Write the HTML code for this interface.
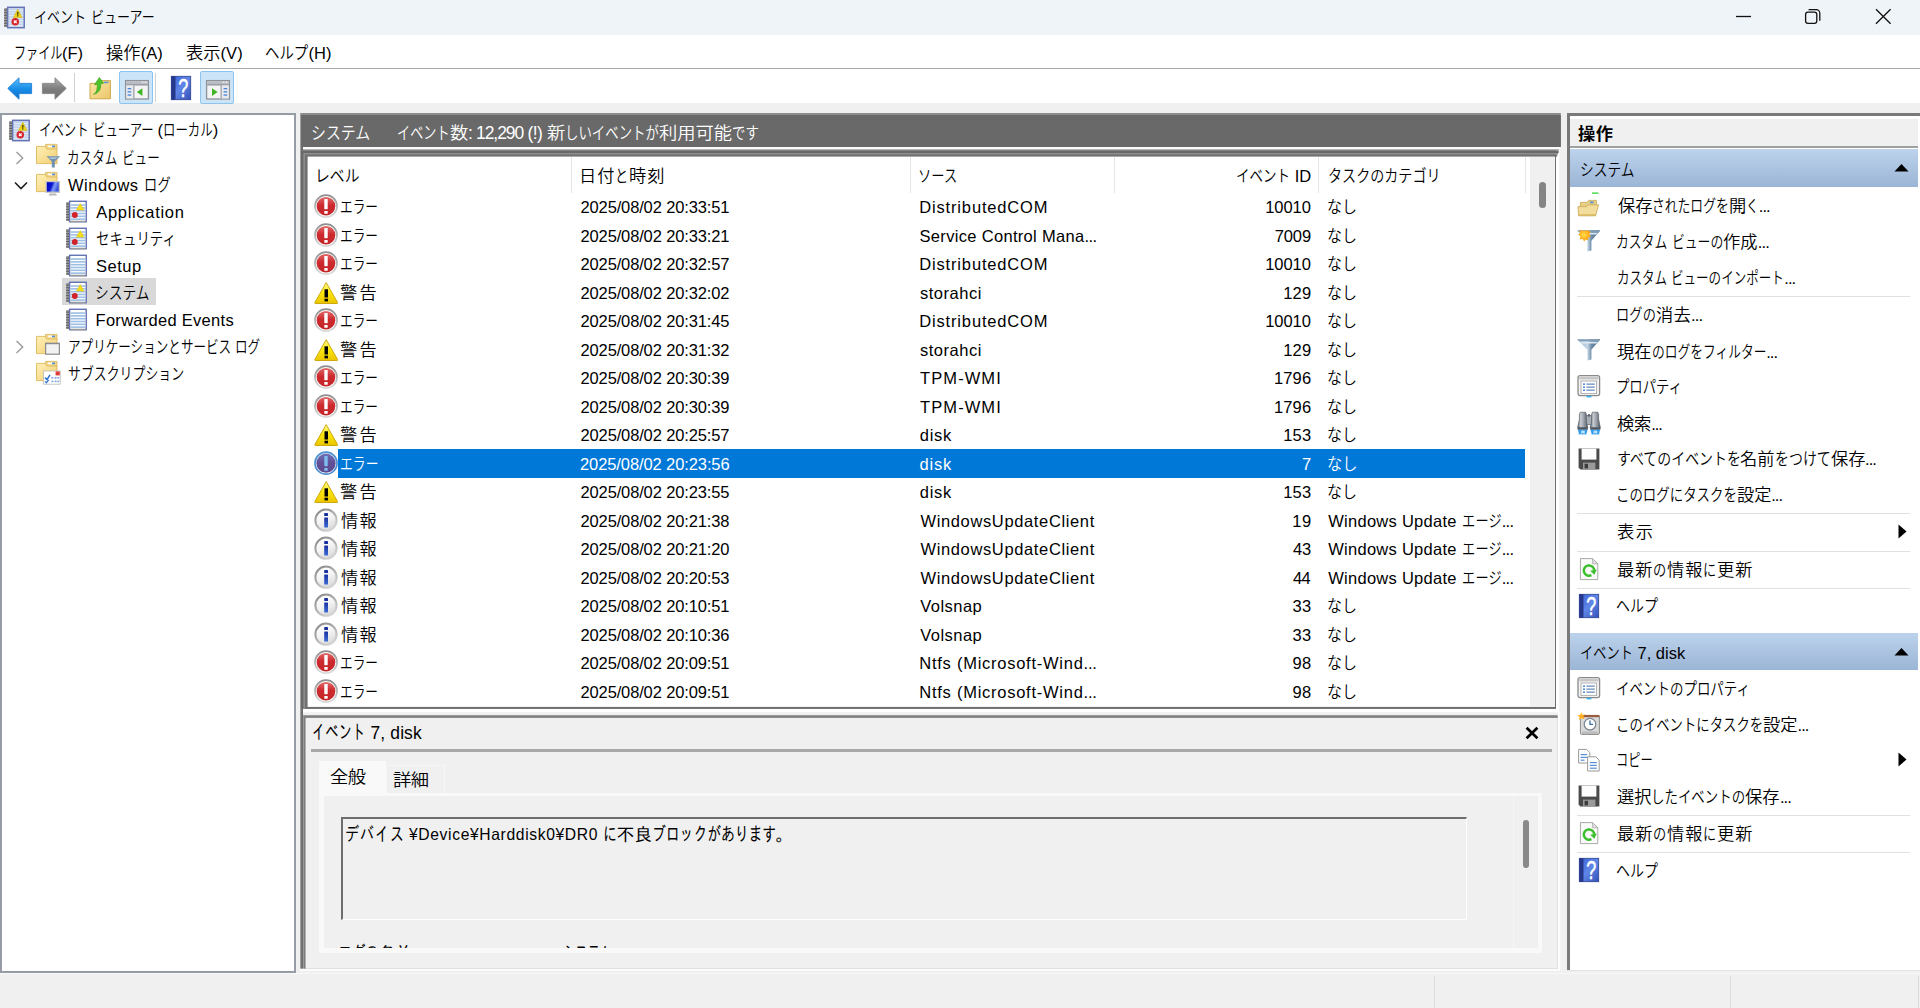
<!DOCTYPE html>
<html lang="ja"><head><meta charset="utf-8"><title>イベント ビューアー</title><style>
html,body{margin:0;padding:0;background:#f0f0f0;}
body{width:1920px;height:1008px;overflow:hidden;position:relative;font-family:"Liberation Sans","Noto Sans CJK JP",sans-serif;font-weight:350;}
.t{position:absolute;white-space:nowrap;display:block;}
.k{display:inline-block;transform-origin:0 50%;}
svg{display:block;overflow:visible}
</style></head><body>
<div style="position:absolute;left:0.00px;top:0.00px;width:1920.00px;height:35.00px;background:#eff4f9;"></div>
<div style="position:absolute;left:3.50px;top:6.00px;width:21.00px;height:23.00px"><svg width="100%" height="100%" viewBox="0 0 22 23"><rect x="0.3" y="1.6" width="3.6" height="19.8" fill="#9a9a9a"/><rect x="0" y="3.2" width="4.6" height="1.1" fill="#5d5d5d"/><rect x="0" y="5.95" width="4.6" height="1.1" fill="#5d5d5d"/><rect x="0" y="8.7" width="4.6" height="1.1" fill="#5d5d5d"/><rect x="0" y="11.45" width="4.6" height="1.1" fill="#5d5d5d"/><rect x="0" y="14.2" width="4.6" height="1.1" fill="#5d5d5d"/><rect x="0" y="16.95" width="4.6" height="1.1" fill="#5d5d5d"/><rect x="0" y="19.7" width="4.6" height="1.1" fill="#5d5d5d"/><rect x="3.8" y="0.8" width="17.4" height="21.4" fill="#c3d3ec" stroke="#6474b4" stroke-width="1.5"/><rect x="5" y="3.6" width="15" height="1" fill="#e3ebf7"/><rect x="5" y="6.25" width="15" height="1" fill="#e3ebf7"/><rect x="5" y="8.9" width="15" height="1" fill="#e3ebf7"/><rect x="5" y="11.55" width="15" height="1" fill="#e3ebf7"/><rect x="5" y="14.2" width="15" height="1" fill="#e3ebf7"/><rect x="5" y="16.85" width="15" height="1" fill="#e3ebf7"/><rect x="5" y="19.5" width="15" height="1" fill="#e3ebf7"/><path d="M14.4 2.8L19 11.6H9.8Z" fill="#eed31a" stroke="#cdb000" stroke-width="0.5"/><rect x="13.8" y="5.6" width="1.3" height="3" fill="#3a3000"/><rect x="13.8" y="9.2" width="1.3" height="1.2" fill="#3a3000"/><circle cx="11.8" cy="16" r="3.9" fill="#d8232a"/><path d="M10.4 14.6L13.2 17.4M13.2 14.6L10.4 17.4" stroke="#fff" stroke-width="1.3"/></svg></div>
<span id="t0" class="t " style="top:6.30px;font-size:16.00px;line-height:24px;color:#000;left:34.02px;"><span class="k" style="transform:scaleX(0.813);margin-right:-0.748em">イベント</span> <span class="k" style="transform:scaleX(0.813);margin-right:-0.934em">ビューアー</span></span>
<svg style="position:absolute;left:1730px;top:4px" width="170" height="26" viewBox="0 0 170 26" fill="none" stroke="#111" stroke-width="1.3"><path d="M6 12.5H21"/><rect x="75.6" y="8.2" width="11.2" height="11.2" rx="2.4"/><path d="M78.6 5.6H86.2a3.6 3.6 0 0 1 3.6 3.6V16.8"/><path d="M146 5.2L160.6 19.8M160.6 5.2L146 19.8"/></svg>
<div style="position:absolute;left:0.00px;top:35.00px;width:1920.00px;height:33.00px;background:#fff;"></div>
<span id="t1" class="t " style="top:40.60px;font-size:16.50px;line-height:24px;color:#000;left:13.61px;"><span class="k" style="transform:scaleX(0.734);margin-right:-1.065em">ファイル</span>(F)</span>
<span id="t2" class="t " style="top:40.60px;font-size:16.50px;line-height:24px;color:#000;left:106.21px;letter-spacing:0.010px;"><span class="k" style="transform:scaleX(1.045);margin-right:0.090em">操作</span>(A)</span>
<span id="t3" class="t " style="top:40.60px;font-size:16.50px;line-height:24px;color:#000;left:185.66px;letter-spacing:0.125px;"><span class="k" style="transform:scaleX(1.045);margin-right:0.090em">表示</span>(V)</span>
<span id="t4" class="t " style="top:40.60px;font-size:16.50px;line-height:24px;color:#000;left:265.27px;"><span class="k" style="transform:scaleX(0.874);margin-right:-0.377em">ヘルプ</span>(H)</span>
<div style="position:absolute;left:0.00px;top:68.00px;width:1920.00px;height:1.00px;background:#a8a8a8;"></div>
<div style="position:absolute;left:0.00px;top:69.00px;width:1920.00px;height:1.00px;background:#ececec;"></div>
<div style="position:absolute;left:0.00px;top:69.00px;width:1920.00px;height:34.00px;background:#fff;"></div>
<div style="position:absolute;left:7.00px;top:77.00px;width:26.00px;height:23.00px"><svg width="100%" height="100%" viewBox="0 0 26 23"><defs><linearGradient id="g1" x1="0" y1="0" x2="0" y2="1"><stop offset="0" stop-color="#5cc0ff"/><stop offset="0.5" stop-color="#1b8fe8"/><stop offset="1" stop-color="#0a6ccc"/></linearGradient></defs><path d="M0.8 11.4L12 0.8V6.4H24.6V16.6H12V22.2Z" fill="url(#g1)" stroke="#2a86d8" stroke-width="1" stroke-linejoin="round"/></svg></div>
<div style="position:absolute;left:41.00px;top:77.00px;width:26.00px;height:23.00px"><svg width="100%" height="100%" viewBox="0 0 26 23"><defs><linearGradient id="g2" x1="0" y1="0" x2="0" y2="1"><stop offset="0" stop-color="#b0b0b0"/><stop offset="0.5" stop-color="#7e7e7e"/><stop offset="1" stop-color="#6c6c6c"/></linearGradient></defs><path d="M25.2 11.4L14 0.8V6.4H1.4V16.6H14V22.2Z" fill="url(#g2)" stroke="#8a8a8a" stroke-width="1" stroke-linejoin="round"/></svg></div>
<div style="position:absolute;left:73.50px;top:73.00px;width:1.00px;height:29.00px;background:#d0d0d0;"></div>
<div style="position:absolute;left:89.00px;top:77.00px;width:23.00px;height:23.00px"><svg width="100%" height="100%" viewBox="0 0 23 23"><defs><linearGradient id="g3" x1="0" y1="0" x2="1" y2="1"><stop offset="0" stop-color="#fbe7a6"/><stop offset="1" stop-color="#eac66a"/></linearGradient></defs><path d="M1 6.4H9L11 3.6H21.4V21.8H1Z" fill="url(#g3)" stroke="#cfa94e" stroke-width="1"/><rect x="15" y="4.6" width="4.4" height="1.6" fill="#5b97dc"/><path d="M4.6 17.2C8.4 15.4 8.2 10.4 8.4 7.2L5.6 7.6L10.4 0.6L14.6 6.2L11.8 6.6C12 11 10.6 16.4 4.6 17.2Z" fill="#4fc32c" stroke="#35a31a" stroke-width="0.7"/></svg></div>
<div style="position:absolute;left:118.50px;top:71.00px;width:34.50px;height:32.50px;background:#cce4f7;border:1px solid #8cc4ee;box-sizing:border-box;border-radius:2px"></div>
<div style="position:absolute;left:124.50px;top:80.00px;width:24.00px;height:20.00px"><svg width="100%" height="100%" viewBox="0 0 24 20"><rect x="0.6" y="0.6" width="22.8" height="18.4" fill="#f4f4f4" stroke="#8d9198" stroke-width="1.3"/><rect x="1.2" y="1.2" width="21.6" height="3.2" fill="#b9bcc2"/><rect x="1.2" y="4.2" width="21.6" height="1.3" fill="#8d9198"/><rect x="16.6" y="1.6" width="1.8" height="1.2" fill="#f4f4f4"/><rect x="19.6" y="1.6" width="1.8" height="1.2" fill="#f4f4f4"/><rect x="8.2" y="5.4" width="1.2" height="13" fill="#8d9198"/><rect x="1.3" y="5.5" width="6.9" height="12.9" fill="#e6e9ee"/><rect x="2.6" y="8" width="3.6" height="1.3" fill="#4a86d8"/><rect x="2.6" y="11.2" width="3.6" height="1.3" fill="#4a86d8"/><rect x="2.6" y="14.4" width="3.6" height="1.3" fill="#4a86d8"/><path d="M17.4 8.2V16L11.8 12.1Z" fill="#3fb526"/></svg></div>
<div style="position:absolute;left:154.50px;top:73.00px;width:1.00px;height:29.00px;background:#d0d0d0;"></div>
<div style="position:absolute;left:171.00px;top:75.50px;width:20.00px;height:24.00px"><svg width="100%" height="100%" viewBox="0 0 20 24"><defs><linearGradient id="g4" x1="0" y1="0" x2="1" y2="1"><stop offset="0" stop-color="#3a63d6"/><stop offset="0.5" stop-color="#5f86e6"/><stop offset="1" stop-color="#3350b8"/></linearGradient></defs><rect x="0.3" y="0.3" width="19.4" height="23.4" fill="url(#g4)" stroke="#2c3f94" stroke-width="0.8"/><rect x="0.3" y="0.3" width="4.2" height="23.4" fill="#26378c"/><text transform="translate(12.2 20.6) scale(0.72 1)" text-anchor="middle" font-family="Liberation Sans,sans-serif" font-size="25" fill="#fff" stroke="#fff" stroke-width="0.5">?</text></svg></div>
<div style="position:absolute;left:199.50px;top:71.00px;width:34.50px;height:32.50px;background:#cce4f7;border:1px solid #8cc4ee;box-sizing:border-box;border-radius:2px"></div>
<div style="position:absolute;left:205.50px;top:80.00px;width:24.00px;height:20.00px"><svg width="100%" height="100%" viewBox="0 0 24 20"><rect x="0.6" y="0.6" width="22.8" height="18.4" fill="#f4f4f4" stroke="#8d9198" stroke-width="1.3"/><rect x="1.2" y="1.2" width="21.6" height="3.2" fill="#b9bcc2"/><rect x="1.2" y="4.2" width="21.6" height="1.3" fill="#8d9198"/><rect x="16.6" y="1.6" width="1.8" height="1.2" fill="#f4f4f4"/><rect x="19.6" y="1.6" width="1.8" height="1.2" fill="#f4f4f4"/><rect x="14.6" y="5.4" width="1.2" height="13" fill="#8d9198"/><rect x="15.8" y="5.5" width="6.9" height="12.9" fill="#e6e9ee"/><rect x="17.6" y="8" width="3.6" height="1.3" fill="#4a86d8"/><rect x="17.6" y="11.2" width="3.6" height="1.3" fill="#4a86d8"/><rect x="17.6" y="14.4" width="3.6" height="1.3" fill="#4a86d8"/><path d="M6 8.2V16L11.6 12.1Z" fill="#3fb526"/></svg></div>
<div style="position:absolute;left:0.00px;top:113.00px;width:296.00px;height:859.50px;background:#fff;border:2px solid #969ca6;box-sizing:border-box"></div>
<div style="position:absolute;left:62.00px;top:278.00px;width:94.00px;height:26.50px;background:#d9d9d9;"></div>
<div style="position:absolute;left:9.00px;top:118.80px;width:21.00px;height:23.00px"><svg width="100%" height="100%" viewBox="0 0 22 23"><rect x="0.3" y="1.6" width="3.6" height="19.8" fill="#9a9a9a"/><rect x="0" y="3.2" width="4.6" height="1.1" fill="#5d5d5d"/><rect x="0" y="5.95" width="4.6" height="1.1" fill="#5d5d5d"/><rect x="0" y="8.7" width="4.6" height="1.1" fill="#5d5d5d"/><rect x="0" y="11.45" width="4.6" height="1.1" fill="#5d5d5d"/><rect x="0" y="14.2" width="4.6" height="1.1" fill="#5d5d5d"/><rect x="0" y="16.95" width="4.6" height="1.1" fill="#5d5d5d"/><rect x="0" y="19.7" width="4.6" height="1.1" fill="#5d5d5d"/><rect x="3.8" y="0.8" width="17.4" height="21.4" fill="#c3d3ec" stroke="#6474b4" stroke-width="1.5"/><rect x="5" y="3.6" width="15" height="1" fill="#e3ebf7"/><rect x="5" y="6.25" width="15" height="1" fill="#e3ebf7"/><rect x="5" y="8.9" width="15" height="1" fill="#e3ebf7"/><rect x="5" y="11.55" width="15" height="1" fill="#e3ebf7"/><rect x="5" y="14.2" width="15" height="1" fill="#e3ebf7"/><rect x="5" y="16.85" width="15" height="1" fill="#e3ebf7"/><rect x="5" y="19.5" width="15" height="1" fill="#e3ebf7"/><path d="M14.4 2.8L19 11.6H9.8Z" fill="#eed31a" stroke="#cdb000" stroke-width="0.5"/><rect x="13.8" y="5.6" width="1.3" height="3" fill="#3a3000"/><rect x="13.8" y="9.2" width="1.3" height="1.2" fill="#3a3000"/><circle cx="11.8" cy="16" r="3.9" fill="#d8232a"/><path d="M10.4 14.6L13.2 17.4M13.2 14.6L10.4 17.4" stroke="#fff" stroke-width="1.3"/></svg></div>
<span id="t5" class="t " style="top:118.10px;font-size:16.50px;line-height:24px;color:#000;left:38.50px;"><span class="k" style="transform:scaleX(0.751);margin-right:-0.996em">イベント</span> <span class="k" style="transform:scaleX(0.751);margin-right:-1.245em">ビューアー</span> (<span class="k" style="transform:scaleX(0.751);margin-right:-0.996em">ローカル</span>)</span>
<svg style="position:absolute;left:14.5px;top:150.5px" width="9" height="14" viewBox="0 0 9 14"><path d="M1.5 1L7.7 7L1.5 13" fill="none" stroke="#9b9b9b" stroke-width="1.4"/></svg>
<div style="position:absolute;left:36.00px;top:144.40px;width:25.00px;height:24.00px"><svg width="100%" height="100%" viewBox="0 0 25 24"><defs><linearGradient id="g5" x1="0" y1="0" x2="1" y2="1"><stop offset="0" stop-color="#fff0b8"/><stop offset="1" stop-color="#f2cf72"/></linearGradient></defs><path d="M9.5 0.4H21V5.5H9.5Z" fill="#f0d58a" stroke="#d9b65a" stroke-width="0.8"/><rect x="12" y="1.6" width="5" height="1.6" fill="#fff"/><rect x="16" y="1.6" width="3" height="1.6" fill="#4a90e2"/><path d="M0.5 2.4H9L11 5H21V19.6H0.5Z" fill="url(#g5)" stroke="#dcb95c" stroke-width="0.9"/><path d="M10.4 12.3H24.2L18.8 17.6V23.6H15.8V17.6Z" fill="#6f90b0"/><path d="M12.2 13.2H22.2L19.4 15H15Z" fill="#a9c3da"/></svg></div>
<span id="t6" class="t " style="top:145.50px;font-size:16.50px;line-height:24px;color:#000;left:67.22px;"><span class="k" style="transform:scaleX(0.764);margin-right:-0.944em">カスタム</span> <span class="k" style="transform:scaleX(0.764);margin-right:-0.708em">ビュー</span></span>
<svg style="position:absolute;left:13.5px;top:180.5px" width="14" height="9" viewBox="0 0 14 9"><path d="M1 1.5L7 7.6L13 1.5" fill="none" stroke="#1e1e1e" stroke-width="1.5"/></svg>
<div style="position:absolute;left:36.00px;top:171.60px;width:25.00px;height:24.00px"><svg width="100%" height="100%" viewBox="0 0 25 24"><defs><linearGradient id="g6" x1="0" y1="0" x2="1" y2="1"><stop offset="0" stop-color="#fff0b8"/><stop offset="1" stop-color="#f2cf72"/></linearGradient></defs><path d="M9.5 0.4H21V5.5H9.5Z" fill="#f0d58a" stroke="#d9b65a" stroke-width="0.8"/><rect x="12" y="1.6" width="5" height="1.6" fill="#fff"/><rect x="16" y="1.6" width="3" height="1.6" fill="#4a90e2"/><path d="M0.5 2.4H9L11 5H21V19.6H0.5Z" fill="url(#g6)" stroke="#dcb95c" stroke-width="0.9"/><defs><linearGradient id="g7" x1="0" y1="0" x2="1" y2="0.3"><stop offset="0" stop-color="#0000c0"/><stop offset="0.45" stop-color="#0a14d0"/><stop offset="0.7" stop-color="#7f9cf5"/><stop offset="1" stop-color="#3b55e0"/></linearGradient></defs><rect x="9.6" y="9" width="14.4" height="12" fill="#c6c6c6"/><rect x="10.8" y="10.2" width="12" height="9.4" fill="url(#g7)"/><path d="M13.6 21.6H20L21 23.6H12.6Z" fill="#b8b8b8"/></svg></div>
<span id="t7" class="t " style="top:172.50px;font-size:16.50px;line-height:24px;color:#000;left:68.00px;letter-spacing:0.531px;">Windows <span class="k" style="transform:scaleX(0.800);margin-right:-0.400em">ログ</span></span>
<div style="position:absolute;left:66.20px;top:200.00px;width:21.00px;height:23.00px"><svg width="100%" height="100%" viewBox="0 0 22 23"><rect x="0.3" y="1.6" width="3.6" height="19.8" fill="#9a9a9a"/><rect x="0" y="3.2" width="4.6" height="1.1" fill="#5d5d5d"/><rect x="0" y="5.95" width="4.6" height="1.1" fill="#5d5d5d"/><rect x="0" y="8.7" width="4.6" height="1.1" fill="#5d5d5d"/><rect x="0" y="11.45" width="4.6" height="1.1" fill="#5d5d5d"/><rect x="0" y="14.2" width="4.6" height="1.1" fill="#5d5d5d"/><rect x="0" y="16.95" width="4.6" height="1.1" fill="#5d5d5d"/><rect x="0" y="19.7" width="4.6" height="1.1" fill="#5d5d5d"/><rect x="3.8" y="0.8" width="17.4" height="21.4" fill="#fff" stroke="#6474b4" stroke-width="1.5"/><rect x="4.5" y="21.2" width="16" height="1.6" fill="#9a9a9a"/><rect x="5" y="3.9" width="15" height="1.7" fill="#9dbfe4"/><rect x="5" y="6.85" width="15" height="1.7" fill="#9dbfe4"/><rect x="5" y="9.8" width="15" height="1.7" fill="#9dbfe4"/><rect x="5" y="12.75" width="15" height="1.7" fill="#9dbfe4"/><rect x="5" y="15.7" width="15" height="1.7" fill="#9dbfe4"/><rect x="5" y="18.65" width="15" height="1.7" fill="#9dbfe4"/><path d="M14.9 3.2L18.9 10H10.9Z" fill="#f4dc1c" stroke="#e2c600" stroke-width="0.5"/><circle cx="9.2" cy="15.2" r="3.1" fill="#d2232a"/></svg></div>
<span id="t8" class="t " style="top:199.50px;font-size:16.50px;line-height:24px;color:#000;left:96.23px;letter-spacing:0.692px;">Application</span>
<div style="position:absolute;left:66.20px;top:227.00px;width:21.00px;height:23.00px"><svg width="100%" height="100%" viewBox="0 0 22 23"><rect x="0.3" y="1.6" width="3.6" height="19.8" fill="#9a9a9a"/><rect x="0" y="3.2" width="4.6" height="1.1" fill="#5d5d5d"/><rect x="0" y="5.95" width="4.6" height="1.1" fill="#5d5d5d"/><rect x="0" y="8.7" width="4.6" height="1.1" fill="#5d5d5d"/><rect x="0" y="11.45" width="4.6" height="1.1" fill="#5d5d5d"/><rect x="0" y="14.2" width="4.6" height="1.1" fill="#5d5d5d"/><rect x="0" y="16.95" width="4.6" height="1.1" fill="#5d5d5d"/><rect x="0" y="19.7" width="4.6" height="1.1" fill="#5d5d5d"/><rect x="3.8" y="0.8" width="17.4" height="21.4" fill="#fff" stroke="#6474b4" stroke-width="1.5"/><rect x="4.5" y="21.2" width="16" height="1.6" fill="#9a9a9a"/><rect x="5" y="3.9" width="15" height="1.7" fill="#9dbfe4"/><rect x="5" y="6.85" width="15" height="1.7" fill="#9dbfe4"/><rect x="5" y="9.8" width="15" height="1.7" fill="#9dbfe4"/><rect x="5" y="12.75" width="15" height="1.7" fill="#9dbfe4"/><rect x="5" y="15.7" width="15" height="1.7" fill="#9dbfe4"/><rect x="5" y="18.65" width="15" height="1.7" fill="#9dbfe4"/><path d="M14.9 3.2L18.9 10H10.9Z" fill="#f4dc1c" stroke="#e2c600" stroke-width="0.5"/><circle cx="9.2" cy="15.2" r="3.1" fill="#d2232a"/></svg></div>
<span id="t9" class="t " style="top:226.50px;font-size:16.50px;line-height:24px;color:#000;left:95.60px;"><span class="k" style="transform:scaleX(0.816);margin-right:-1.107em">セキュリティ</span></span>
<div style="position:absolute;left:66.20px;top:254.00px;width:21.00px;height:23.00px"><svg width="100%" height="100%" viewBox="0 0 22 23"><rect x="0.3" y="1.6" width="3.6" height="19.8" fill="#9a9a9a"/><rect x="0" y="3.2" width="4.6" height="1.1" fill="#5d5d5d"/><rect x="0" y="5.95" width="4.6" height="1.1" fill="#5d5d5d"/><rect x="0" y="8.7" width="4.6" height="1.1" fill="#5d5d5d"/><rect x="0" y="11.45" width="4.6" height="1.1" fill="#5d5d5d"/><rect x="0" y="14.2" width="4.6" height="1.1" fill="#5d5d5d"/><rect x="0" y="16.95" width="4.6" height="1.1" fill="#5d5d5d"/><rect x="0" y="19.7" width="4.6" height="1.1" fill="#5d5d5d"/><rect x="3.8" y="0.8" width="17.4" height="21.4" fill="#fff" stroke="#6474b4" stroke-width="1.5"/><rect x="4.5" y="21.2" width="16" height="1.6" fill="#9a9a9a"/><rect x="5" y="3.9" width="15" height="1.7" fill="#9dbfe4"/><rect x="5" y="6.85" width="15" height="1.7" fill="#9dbfe4"/><rect x="5" y="9.8" width="15" height="1.7" fill="#9dbfe4"/><rect x="5" y="12.75" width="15" height="1.7" fill="#9dbfe4"/><rect x="5" y="15.7" width="15" height="1.7" fill="#9dbfe4"/><rect x="5" y="18.65" width="15" height="1.7" fill="#9dbfe4"/></svg></div>
<span id="t10" class="t " style="top:253.50px;font-size:16.50px;line-height:24px;color:#000;left:95.99px;letter-spacing:0.520px;">Setup</span>
<div style="position:absolute;left:66.20px;top:281.00px;width:21.00px;height:23.00px"><svg width="100%" height="100%" viewBox="0 0 22 23"><rect x="0.3" y="1.6" width="3.6" height="19.8" fill="#9a9a9a"/><rect x="0" y="3.2" width="4.6" height="1.1" fill="#5d5d5d"/><rect x="0" y="5.95" width="4.6" height="1.1" fill="#5d5d5d"/><rect x="0" y="8.7" width="4.6" height="1.1" fill="#5d5d5d"/><rect x="0" y="11.45" width="4.6" height="1.1" fill="#5d5d5d"/><rect x="0" y="14.2" width="4.6" height="1.1" fill="#5d5d5d"/><rect x="0" y="16.95" width="4.6" height="1.1" fill="#5d5d5d"/><rect x="0" y="19.7" width="4.6" height="1.1" fill="#5d5d5d"/><rect x="3.8" y="0.8" width="17.4" height="21.4" fill="#fff" stroke="#6474b4" stroke-width="1.5"/><rect x="4.5" y="21.2" width="16" height="1.6" fill="#9a9a9a"/><rect x="5" y="3.9" width="15" height="1.7" fill="#9dbfe4"/><rect x="5" y="6.85" width="15" height="1.7" fill="#9dbfe4"/><rect x="5" y="9.8" width="15" height="1.7" fill="#9dbfe4"/><rect x="5" y="12.75" width="15" height="1.7" fill="#9dbfe4"/><rect x="5" y="15.7" width="15" height="1.7" fill="#9dbfe4"/><rect x="5" y="18.65" width="15" height="1.7" fill="#9dbfe4"/><path d="M14.9 3.2L18.9 10H10.9Z" fill="#f4dc1c" stroke="#e2c600" stroke-width="0.5"/><circle cx="9.2" cy="15.2" r="3.1" fill="#d2232a"/></svg></div>
<span id="t11" class="t " style="top:280.50px;font-size:16.50px;line-height:24px;color:#000;left:94.82px;"><span class="k" style="transform:scaleX(0.833);margin-right:-0.670em">システム</span></span>
<div style="position:absolute;left:66.20px;top:308.00px;width:21.00px;height:23.00px"><svg width="100%" height="100%" viewBox="0 0 22 23"><rect x="0.3" y="1.6" width="3.6" height="19.8" fill="#9a9a9a"/><rect x="0" y="3.2" width="4.6" height="1.1" fill="#5d5d5d"/><rect x="0" y="5.95" width="4.6" height="1.1" fill="#5d5d5d"/><rect x="0" y="8.7" width="4.6" height="1.1" fill="#5d5d5d"/><rect x="0" y="11.45" width="4.6" height="1.1" fill="#5d5d5d"/><rect x="0" y="14.2" width="4.6" height="1.1" fill="#5d5d5d"/><rect x="0" y="16.95" width="4.6" height="1.1" fill="#5d5d5d"/><rect x="0" y="19.7" width="4.6" height="1.1" fill="#5d5d5d"/><rect x="3.8" y="0.8" width="17.4" height="21.4" fill="#fff" stroke="#6474b4" stroke-width="1.5"/><rect x="4.5" y="21.2" width="16" height="1.6" fill="#9a9a9a"/><rect x="5" y="3.9" width="15" height="1.7" fill="#9dbfe4"/><rect x="5" y="6.85" width="15" height="1.7" fill="#9dbfe4"/><rect x="5" y="9.8" width="15" height="1.7" fill="#9dbfe4"/><rect x="5" y="12.75" width="15" height="1.7" fill="#9dbfe4"/><rect x="5" y="15.7" width="15" height="1.7" fill="#9dbfe4"/><rect x="5" y="18.65" width="15" height="1.7" fill="#9dbfe4"/></svg></div>
<span id="t12" class="t " style="top:307.50px;font-size:16.50px;line-height:24px;color:#000;left:95.55px;letter-spacing:0.279px;">Forwarded Events</span>
<svg style="position:absolute;left:14.5px;top:339.5px" width="9" height="14" viewBox="0 0 9 14"><path d="M1.5 1L7.7 7L1.5 13" fill="none" stroke="#9b9b9b" stroke-width="1.4"/></svg>
<div style="position:absolute;left:36.00px;top:334.00px;width:25.00px;height:24.00px"><svg width="100%" height="100%" viewBox="0 0 25 24"><defs><linearGradient id="g8" x1="0" y1="0" x2="1" y2="1"><stop offset="0" stop-color="#fff0b8"/><stop offset="1" stop-color="#f2cf72"/></linearGradient></defs><path d="M9.5 0.4H21V5.5H9.5Z" fill="#f0d58a" stroke="#d9b65a" stroke-width="0.8"/><rect x="12" y="1.6" width="5" height="1.6" fill="#fff"/><rect x="16" y="1.6" width="3" height="1.6" fill="#4a90e2"/><path d="M0.5 2.4H9L11 5H21V19.6H0.5Z" fill="url(#g8)" stroke="#dcb95c" stroke-width="0.9"/><rect x="9.6" y="9.4" width="13.8" height="10.8" fill="#f2f2f2" stroke="#8c8c8c" stroke-width="1.2"/><rect x="9.6" y="8.8" width="13.8" height="1.4" fill="#8c8c8c"/></svg></div>
<span id="t13" class="t " style="top:334.50px;font-size:16.50px;line-height:24px;color:#000;left:67.73px;"><span class="k" style="transform:scaleX(0.762);margin-right:-3.091em">アプリケーションとサービス</span> <span class="k" style="transform:scaleX(0.762);margin-right:-0.476em">ログ</span></span>
<div style="position:absolute;left:36.00px;top:361.00px;width:25.00px;height:24.00px"><svg width="100%" height="100%" viewBox="0 0 25 24"><defs><linearGradient id="g9" x1="0" y1="0" x2="1" y2="1"><stop offset="0" stop-color="#fff0b8"/><stop offset="1" stop-color="#f2cf72"/></linearGradient></defs><path d="M9.5 0.4H21V5.5H9.5Z" fill="#f0d58a" stroke="#d9b65a" stroke-width="0.8"/><rect x="12" y="1.6" width="5" height="1.6" fill="#fff"/><rect x="16" y="1.6" width="3" height="1.6" fill="#4a90e2"/><path d="M0.5 2.4H9L11 5H21V19.6H0.5Z" fill="url(#g9)" stroke="#dcb95c" stroke-width="0.9"/><rect x="7.6" y="10" width="16.6" height="13.2" fill="#fff" stroke="#b9b9b9" stroke-width="0.8"/><rect x="19.6" y="10.4" width="4.2" height="4" fill="#e23b3b"/><path d="M9 16.6L11 18.6L14 13.8" fill="none" stroke="#2a6fd0" stroke-width="1.5"/><path d="M9 20.4L10.4 21.8L12.6 18.8" fill="none" stroke="#2a6fd0" stroke-width="1.2"/><rect x="15.4" y="16" width="2" height="1.6" fill="#7fa6dc"/><rect x="18.6" y="16" width="2" height="1.6" fill="#7fa6dc"/><rect x="21.4" y="16" width="1.8" height="1.6" fill="#7fa6dc"/><rect x="15.4" y="19.6" width="2" height="1.6" fill="#7fa6dc"/><rect x="18.6" y="19.6" width="2" height="1.6" fill="#7fa6dc"/><rect x="21.4" y="19.6" width="1.8" height="1.6" fill="#7fa6dc"/></svg></div>
<span id="t14" class="t " style="top:361.50px;font-size:16.50px;line-height:24px;color:#000;left:67.72px;"><span class="k" style="transform:scaleX(0.782);margin-right:-1.961em">サブスクリプション</span></span>
<div style="position:absolute;left:300.00px;top:113.00px;width:1260.50px;height:857.00px;background:#f0f0f0;"></div>
<svg style="position:absolute;left:0;top:0" width="1920" height="1008" viewBox="0 0 1920 1008"><rect x="300.00" y="113.00" width="1260.80" height="34.10" fill="#8c8c8c"/><rect x="301.70" y="115.00" width="1259.10" height="32.10" fill="#696969"/><rect x="300.00" y="147.10" width="1260.80" height="2.10" fill="#fdfdfd"/><rect x="300.00" y="149.20" width="1259.20" height="563.00" fill="#ffffff"/><rect x="300.00" y="149.20" width="1256.00" height="559.50" fill="#a0a0a0"/><rect x="301.30" y="150.50" width="1254.70" height="558.20" fill="#696969"/><rect x="303.30" y="153.00" width="1252.70" height="555.70" fill="#8c8c8c"/><rect x="305.00" y="154.50" width="1251.00" height="554.20" fill="#707070"/><rect x="1556.00" y="149.20" width="3.00" height="1.30" fill="#a0a0a0"/><rect x="1556.00" y="150.50" width="2.60" height="2.50" fill="#696969"/><rect x="1556.00" y="153.00" width="2.00" height="1.50" fill="#8c8c8c"/><rect x="1556.00" y="154.50" width="1.20" height="2.10" fill="#707070"/><rect x="307.60" y="156.60" width="1247.25" height="550.30" fill="#ffffff"/><rect x="300.00" y="113.00" width="1.20" height="855.80" fill="#a0a0a0"/><rect x="301.10" y="115.00" width="1.90" height="853.80" fill="#696969"/><rect x="302.90" y="715.00" width="1254.90" height="253.80" fill="#9a9a9a"/><rect x="304.20" y="716.30" width="1253.60" height="252.50" fill="#757575"/><rect x="305.50" y="717.80" width="1252.30" height="251.00" fill="#f0f0f0"/><rect x="1557.80" y="712.20" width="2.40" height="258.00" fill="#fdfdfd"/><rect x="300.00" y="968.80" width="1260.20" height="2.00" fill="#fdfdfd"/></svg>
<span id="t15" class="t " style="top:120.50px;font-size:17.50px;line-height:24px;color:#fff;left:311.06px;"><span class="k" style="transform:scaleX(0.853);margin-right:-0.587em">システム</span></span>
<span id="t16" class="t " style="top:120.50px;font-size:17.50px;line-height:24px;color:#fff;left:397.22px;"><span class="k" style="transform:scaleX(0.751);margin-right:-0.997em">イベント</span><span class="k" style="transform:scaleX(1.045);margin-right:0.045em">数</span>:</span>
<span id="t17" class="t " style="top:120.50px;font-size:17.50px;line-height:24px;color:#fff;left:475.97px;letter-spacing:-1.043px;">12,290</span>
<span id="t18" class="t " style="top:120.50px;font-size:17.50px;line-height:24px;color:#fff;left:527.50px;letter-spacing:-0.616px;">(!)</span>
<span id="t19" class="t " style="top:120.50px;font-size:17.50px;line-height:24px;color:#fff;left:546.73px;"><span class="k" style="transform:scaleX(1.045);margin-right:0.045em">新</span><span class="k" style="transform:scaleX(0.767);margin-right:-1.634em">しいイベントが</span><span class="k" style="transform:scaleX(1.045);margin-right:0.180em">利用可能</span><span class="k" style="transform:scaleX(0.767);margin-right:-0.467em">です</span></span>
<span id="t20" class="t " style="top:163.50px;font-size:16.50px;line-height:24px;color:#000;left:314.54px;"><span class="k" style="transform:scaleX(0.898);margin-right:-0.306em">レベル</span></span>
<span id="t21" class="t " style="top:163.50px;font-size:16.50px;line-height:24px;color:#000;left:578.50px;letter-spacing:1.060px;"><span class="k" style="transform:scaleX(1.045);margin-right:0.090em">日付</span><span class="k" style="transform:scaleX(0.800);margin-right:-0.200em">と</span><span class="k" style="transform:scaleX(1.045);margin-right:0.090em">時刻</span></span>
<span id="t22" class="t " style="top:163.50px;font-size:16.50px;line-height:24px;color:#000;left:918.25px;"><span class="k" style="transform:scaleX(0.806);margin-right:-0.583em">ソース</span></span>
<span id="t23" class="t " style="top:163.50px;font-size:16.50px;line-height:24px;color:#000;right:608.72px;"><span class="k" style="transform:scaleX(0.818);margin-right:-0.730em">イベント</span> ID</span>
<span id="t24" class="t " style="top:163.50px;font-size:16.50px;line-height:24px;color:#000;left:1327.63px;"><span class="k" style="transform:scaleX(0.853);margin-right:-1.174em">タスクのカテゴリ</span></span>
<div style="position:absolute;left:571.00px;top:157.00px;width:1.00px;height:35.50px;background:#e5e5e5;"></div>
<div style="position:absolute;left:910.00px;top:157.00px;width:1.00px;height:35.50px;background:#e5e5e5;"></div>
<div style="position:absolute;left:1114.00px;top:157.00px;width:1.00px;height:35.50px;background:#e5e5e5;"></div>
<div style="position:absolute;left:1318.00px;top:157.00px;width:1.00px;height:35.50px;background:#e5e5e5;"></div>
<div style="position:absolute;left:1524.50px;top:157.00px;width:1.00px;height:35.50px;background:#e5e5e5;"></div>
<div style="position:absolute;left:1530.00px;top:156.60px;width:24.90px;height:550.30px;background:#f0f0f0;"></div>
<div style="position:absolute;left:1539.00px;top:182.00px;width:7.00px;height:25.50px;background:#858585;border-radius:3.5px"></div>
<div style="position:absolute;left:313.50px;top:194.00px;width:24.00px;height:24.00px"><svg width="100%" height="100%" viewBox="0 0 24 24"><defs><linearGradient id="g10" x1="0" y1="0" x2="0" y2="1"><stop offset="0" stop-color="#8f8f8f"/><stop offset="1" stop-color="#d9d9d9"/></linearGradient><linearGradient id="g11" x1="0" y1="0" x2="0" y2="1"><stop offset="0" stop-color="#e36a6a"/><stop offset="0.45" stop-color="#cc2a2e"/><stop offset="1" stop-color="#c42428"/></linearGradient></defs><circle cx="12" cy="12.2" r="11" fill="none" stroke="url(#g10)" stroke-width="1.7"/><circle cx="12" cy="12.2" r="9.3" fill="url(#g11)"/><rect x="10.3" y="5" width="3.4" height="10.2" rx="0.6" fill="#fff"/><rect x="10.3" y="16.9" width="3.4" height="2.8" rx="0.5" fill="#fff"/></svg></div>
<span id="t25" class="t " style="top:195.00px;font-size:16.50px;line-height:24px;color:#000;left:340.43px;"><span class="k" style="transform:scaleX(0.768);margin-right:-0.697em">エラー</span></span>
<span id="t26" class="t " style="top:195.00px;font-size:16.50px;line-height:24px;color:#000;left:580.52px;letter-spacing:-0.140px;">2025/08/02 20:33:51</span>
<span id="t27" class="t " style="top:195.00px;font-size:16.50px;line-height:24px;color:#000;left:919.28px;letter-spacing:0.837px;">DistributedCOM</span>
<span id="t28" class="t " style="top:195.00px;font-size:16.50px;line-height:24px;color:#000;right:609.19px;letter-spacing:-0.065px;">10010</span>
<span id="t29" class="t " style="top:195.00px;font-size:16.50px;line-height:24px;color:#000;left:1327.46px;"><span class="k" style="transform:scaleX(0.908);margin-right:-0.183em">なし</span></span>
<div style="position:absolute;left:313.50px;top:222.50px;width:24.00px;height:24.00px"><svg width="100%" height="100%" viewBox="0 0 24 24"><defs><linearGradient id="g12" x1="0" y1="0" x2="0" y2="1"><stop offset="0" stop-color="#8f8f8f"/><stop offset="1" stop-color="#d9d9d9"/></linearGradient><linearGradient id="g13" x1="0" y1="0" x2="0" y2="1"><stop offset="0" stop-color="#e36a6a"/><stop offset="0.45" stop-color="#cc2a2e"/><stop offset="1" stop-color="#c42428"/></linearGradient></defs><circle cx="12" cy="12.2" r="11" fill="none" stroke="url(#g12)" stroke-width="1.7"/><circle cx="12" cy="12.2" r="9.3" fill="url(#g13)"/><rect x="10.3" y="5" width="3.4" height="10.2" rx="0.6" fill="#fff"/><rect x="10.3" y="16.9" width="3.4" height="2.8" rx="0.5" fill="#fff"/></svg></div>
<span id="t30" class="t " style="top:223.50px;font-size:16.50px;line-height:24px;color:#000;left:340.43px;"><span class="k" style="transform:scaleX(0.768);margin-right:-0.697em">エラー</span></span>
<span id="t31" class="t " style="top:223.50px;font-size:16.50px;line-height:24px;color:#000;left:580.52px;letter-spacing:-0.140px;">2025/08/02 20:33:21</span>
<span id="t32" class="t " style="top:223.50px;font-size:16.50px;line-height:24px;color:#000;left:919.54px;letter-spacing:0.317px;">Service Control Mana<span style="letter-spacing:-0.63px">...</span></span>
<span id="t33" class="t " style="top:223.50px;font-size:16.50px;line-height:24px;color:#000;right:609.06px;letter-spacing:-0.140px;">7009</span>
<span id="t34" class="t " style="top:223.50px;font-size:16.50px;line-height:24px;color:#000;left:1327.46px;"><span class="k" style="transform:scaleX(0.908);margin-right:-0.183em">なし</span></span>
<div style="position:absolute;left:313.50px;top:251.00px;width:24.00px;height:24.00px"><svg width="100%" height="100%" viewBox="0 0 24 24"><defs><linearGradient id="g14" x1="0" y1="0" x2="0" y2="1"><stop offset="0" stop-color="#8f8f8f"/><stop offset="1" stop-color="#d9d9d9"/></linearGradient><linearGradient id="g15" x1="0" y1="0" x2="0" y2="1"><stop offset="0" stop-color="#e36a6a"/><stop offset="0.45" stop-color="#cc2a2e"/><stop offset="1" stop-color="#c42428"/></linearGradient></defs><circle cx="12" cy="12.2" r="11" fill="none" stroke="url(#g14)" stroke-width="1.7"/><circle cx="12" cy="12.2" r="9.3" fill="url(#g15)"/><rect x="10.3" y="5" width="3.4" height="10.2" rx="0.6" fill="#fff"/><rect x="10.3" y="16.9" width="3.4" height="2.8" rx="0.5" fill="#fff"/></svg></div>
<span id="t35" class="t " style="top:252.00px;font-size:16.50px;line-height:24px;color:#000;left:340.43px;"><span class="k" style="transform:scaleX(0.768);margin-right:-0.697em">エラー</span></span>
<span id="t36" class="t " style="top:252.00px;font-size:16.50px;line-height:24px;color:#000;left:580.52px;letter-spacing:-0.140px;">2025/08/02 20:32:57</span>
<span id="t37" class="t " style="top:252.00px;font-size:16.50px;line-height:24px;color:#000;left:919.28px;letter-spacing:0.837px;">DistributedCOM</span>
<span id="t38" class="t " style="top:252.00px;font-size:16.50px;line-height:24px;color:#000;right:609.19px;letter-spacing:-0.065px;">10010</span>
<span id="t39" class="t " style="top:252.00px;font-size:16.50px;line-height:24px;color:#000;left:1327.46px;"><span class="k" style="transform:scaleX(0.908);margin-right:-0.183em">なし</span></span>
<div style="position:absolute;left:313.50px;top:279.50px;width:24.00px;height:24.00px"><svg width="100%" height="100%" viewBox="0 0 24 24"><defs><linearGradient id="g16" x1="0" y1="0" x2="0" y2="1"><stop offset="0" stop-color="#fff899"/><stop offset="0.45" stop-color="#fde910"/><stop offset="1" stop-color="#e9c500"/></linearGradient></defs><path d="M12.2 2.6L23.6 22.6Q23.9 23.4 23 23.5H1.4Q0.5 23.4 0.8 22.6Z" fill="url(#g16)" stroke="#c9a200" stroke-width="0.9" stroke-linejoin="round"/><rect x="10.5" y="9.3" width="3.5" height="8.2" fill="#000"/><rect x="10.5" y="18.7" width="3.5" height="2.7" fill="#000"/></svg></div>
<span id="t40" class="t " style="top:280.50px;font-size:16.50px;line-height:24px;color:#000;left:340.35px;letter-spacing:2.060px;"><span class="k" style="transform:scaleX(1.045);margin-right:0.090em">警告</span></span>
<span id="t41" class="t " style="top:280.50px;font-size:16.50px;line-height:24px;color:#000;left:580.52px;letter-spacing:-0.140px;">2025/08/02 20:32:02</span>
<span id="t42" class="t " style="top:280.50px;font-size:16.50px;line-height:24px;color:#000;left:919.94px;letter-spacing:0.543px;">storahci</span>
<span id="t43" class="t " style="top:280.50px;font-size:16.50px;line-height:24px;color:#000;right:608.81px;letter-spacing:0.110px;">129</span>
<span id="t44" class="t " style="top:280.50px;font-size:16.50px;line-height:24px;color:#000;left:1327.46px;"><span class="k" style="transform:scaleX(0.908);margin-right:-0.183em">なし</span></span>
<div style="position:absolute;left:313.50px;top:308.00px;width:24.00px;height:24.00px"><svg width="100%" height="100%" viewBox="0 0 24 24"><defs><linearGradient id="g17" x1="0" y1="0" x2="0" y2="1"><stop offset="0" stop-color="#8f8f8f"/><stop offset="1" stop-color="#d9d9d9"/></linearGradient><linearGradient id="g18" x1="0" y1="0" x2="0" y2="1"><stop offset="0" stop-color="#e36a6a"/><stop offset="0.45" stop-color="#cc2a2e"/><stop offset="1" stop-color="#c42428"/></linearGradient></defs><circle cx="12" cy="12.2" r="11" fill="none" stroke="url(#g17)" stroke-width="1.7"/><circle cx="12" cy="12.2" r="9.3" fill="url(#g18)"/><rect x="10.3" y="5" width="3.4" height="10.2" rx="0.6" fill="#fff"/><rect x="10.3" y="16.9" width="3.4" height="2.8" rx="0.5" fill="#fff"/></svg></div>
<span id="t45" class="t " style="top:309.00px;font-size:16.50px;line-height:24px;color:#000;left:340.43px;"><span class="k" style="transform:scaleX(0.768);margin-right:-0.697em">エラー</span></span>
<span id="t46" class="t " style="top:309.00px;font-size:16.50px;line-height:24px;color:#000;left:580.52px;letter-spacing:-0.140px;">2025/08/02 20:31:45</span>
<span id="t47" class="t " style="top:309.00px;font-size:16.50px;line-height:24px;color:#000;left:919.28px;letter-spacing:0.837px;">DistributedCOM</span>
<span id="t48" class="t " style="top:309.00px;font-size:16.50px;line-height:24px;color:#000;right:609.19px;letter-spacing:-0.065px;">10010</span>
<span id="t49" class="t " style="top:309.00px;font-size:16.50px;line-height:24px;color:#000;left:1327.46px;"><span class="k" style="transform:scaleX(0.908);margin-right:-0.183em">なし</span></span>
<div style="position:absolute;left:313.50px;top:336.50px;width:24.00px;height:24.00px"><svg width="100%" height="100%" viewBox="0 0 24 24"><defs><linearGradient id="g19" x1="0" y1="0" x2="0" y2="1"><stop offset="0" stop-color="#fff899"/><stop offset="0.45" stop-color="#fde910"/><stop offset="1" stop-color="#e9c500"/></linearGradient></defs><path d="M12.2 2.6L23.6 22.6Q23.9 23.4 23 23.5H1.4Q0.5 23.4 0.8 22.6Z" fill="url(#g19)" stroke="#c9a200" stroke-width="0.9" stroke-linejoin="round"/><rect x="10.5" y="9.3" width="3.5" height="8.2" fill="#000"/><rect x="10.5" y="18.7" width="3.5" height="2.7" fill="#000"/></svg></div>
<span id="t50" class="t " style="top:337.50px;font-size:16.50px;line-height:24px;color:#000;left:340.35px;letter-spacing:2.060px;"><span class="k" style="transform:scaleX(1.045);margin-right:0.090em">警告</span></span>
<span id="t51" class="t " style="top:337.50px;font-size:16.50px;line-height:24px;color:#000;left:580.52px;letter-spacing:-0.140px;">2025/08/02 20:31:32</span>
<span id="t52" class="t " style="top:337.50px;font-size:16.50px;line-height:24px;color:#000;left:919.94px;letter-spacing:0.543px;">storahci</span>
<span id="t53" class="t " style="top:337.50px;font-size:16.50px;line-height:24px;color:#000;right:608.81px;letter-spacing:0.110px;">129</span>
<span id="t54" class="t " style="top:337.50px;font-size:16.50px;line-height:24px;color:#000;left:1327.46px;"><span class="k" style="transform:scaleX(0.908);margin-right:-0.183em">なし</span></span>
<div style="position:absolute;left:313.50px;top:365.00px;width:24.00px;height:24.00px"><svg width="100%" height="100%" viewBox="0 0 24 24"><defs><linearGradient id="g20" x1="0" y1="0" x2="0" y2="1"><stop offset="0" stop-color="#8f8f8f"/><stop offset="1" stop-color="#d9d9d9"/></linearGradient><linearGradient id="g21" x1="0" y1="0" x2="0" y2="1"><stop offset="0" stop-color="#e36a6a"/><stop offset="0.45" stop-color="#cc2a2e"/><stop offset="1" stop-color="#c42428"/></linearGradient></defs><circle cx="12" cy="12.2" r="11" fill="none" stroke="url(#g20)" stroke-width="1.7"/><circle cx="12" cy="12.2" r="9.3" fill="url(#g21)"/><rect x="10.3" y="5" width="3.4" height="10.2" rx="0.6" fill="#fff"/><rect x="10.3" y="16.9" width="3.4" height="2.8" rx="0.5" fill="#fff"/></svg></div>
<span id="t55" class="t " style="top:366.00px;font-size:16.50px;line-height:24px;color:#000;left:340.43px;"><span class="k" style="transform:scaleX(0.768);margin-right:-0.697em">エラー</span></span>
<span id="t56" class="t " style="top:366.00px;font-size:16.50px;line-height:24px;color:#000;left:580.52px;letter-spacing:-0.140px;">2025/08/02 20:30:39</span>
<span id="t57" class="t " style="top:366.00px;font-size:16.50px;line-height:24px;color:#000;left:920.11px;letter-spacing:1.071px;">TPM-WMI</span>
<span id="t58" class="t " style="top:366.00px;font-size:16.50px;line-height:24px;color:#000;right:608.81px;letter-spacing:0.120px;">1796</span>
<span id="t59" class="t " style="top:366.00px;font-size:16.50px;line-height:24px;color:#000;left:1327.46px;"><span class="k" style="transform:scaleX(0.908);margin-right:-0.183em">なし</span></span>
<div style="position:absolute;left:313.50px;top:393.50px;width:24.00px;height:24.00px"><svg width="100%" height="100%" viewBox="0 0 24 24"><defs><linearGradient id="g22" x1="0" y1="0" x2="0" y2="1"><stop offset="0" stop-color="#8f8f8f"/><stop offset="1" stop-color="#d9d9d9"/></linearGradient><linearGradient id="g23" x1="0" y1="0" x2="0" y2="1"><stop offset="0" stop-color="#e36a6a"/><stop offset="0.45" stop-color="#cc2a2e"/><stop offset="1" stop-color="#c42428"/></linearGradient></defs><circle cx="12" cy="12.2" r="11" fill="none" stroke="url(#g22)" stroke-width="1.7"/><circle cx="12" cy="12.2" r="9.3" fill="url(#g23)"/><rect x="10.3" y="5" width="3.4" height="10.2" rx="0.6" fill="#fff"/><rect x="10.3" y="16.9" width="3.4" height="2.8" rx="0.5" fill="#fff"/></svg></div>
<span id="t60" class="t " style="top:394.50px;font-size:16.50px;line-height:24px;color:#000;left:340.43px;"><span class="k" style="transform:scaleX(0.768);margin-right:-0.697em">エラー</span></span>
<span id="t61" class="t " style="top:394.50px;font-size:16.50px;line-height:24px;color:#000;left:580.52px;letter-spacing:-0.140px;">2025/08/02 20:30:39</span>
<span id="t62" class="t " style="top:394.50px;font-size:16.50px;line-height:24px;color:#000;left:920.11px;letter-spacing:1.071px;">TPM-WMI</span>
<span id="t63" class="t " style="top:394.50px;font-size:16.50px;line-height:24px;color:#000;right:608.81px;letter-spacing:0.120px;">1796</span>
<span id="t64" class="t " style="top:394.50px;font-size:16.50px;line-height:24px;color:#000;left:1327.46px;"><span class="k" style="transform:scaleX(0.908);margin-right:-0.183em">なし</span></span>
<div style="position:absolute;left:313.50px;top:422.00px;width:24.00px;height:24.00px"><svg width="100%" height="100%" viewBox="0 0 24 24"><defs><linearGradient id="g24" x1="0" y1="0" x2="0" y2="1"><stop offset="0" stop-color="#fff899"/><stop offset="0.45" stop-color="#fde910"/><stop offset="1" stop-color="#e9c500"/></linearGradient></defs><path d="M12.2 2.6L23.6 22.6Q23.9 23.4 23 23.5H1.4Q0.5 23.4 0.8 22.6Z" fill="url(#g24)" stroke="#c9a200" stroke-width="0.9" stroke-linejoin="round"/><rect x="10.5" y="9.3" width="3.5" height="8.2" fill="#000"/><rect x="10.5" y="18.7" width="3.5" height="2.7" fill="#000"/></svg></div>
<span id="t65" class="t " style="top:423.00px;font-size:16.50px;line-height:24px;color:#000;left:340.35px;letter-spacing:2.060px;"><span class="k" style="transform:scaleX(1.045);margin-right:0.090em">警告</span></span>
<span id="t66" class="t " style="top:423.00px;font-size:16.50px;line-height:24px;color:#000;left:580.52px;letter-spacing:-0.140px;">2025/08/02 20:25:57</span>
<span id="t67" class="t " style="top:423.00px;font-size:16.50px;line-height:24px;color:#000;left:919.78px;letter-spacing:0.714px;">disk</span>
<span id="t68" class="t " style="top:423.00px;font-size:16.50px;line-height:24px;color:#000;right:608.83px;letter-spacing:0.100px;">153</span>
<span id="t69" class="t " style="top:423.00px;font-size:16.50px;line-height:24px;color:#000;left:1327.46px;"><span class="k" style="transform:scaleX(0.908);margin-right:-0.183em">なし</span></span>
<div style="position:absolute;left:337.50px;top:449.00px;width:1187.00px;height:28.50px;background:#0078d7;"></div>
<div style="position:absolute;left:313.50px;top:450.50px;width:24.00px;height:24.00px"><svg width="100%" height="100%" viewBox="0 0 24 24"><defs><linearGradient id="g25" x1="0" y1="0" x2="0" y2="1"><stop offset="0" stop-color="#6f72b8"/><stop offset="0.5" stop-color="#604f95"/><stop offset="1" stop-color="#5c4a8e"/></linearGradient></defs><circle cx="12" cy="12.2" r="11" fill="none" stroke="#4f92d2" stroke-width="1.7"/><circle cx="12" cy="12.2" r="9.6" fill="url(#g25)"/><rect x="10.3" y="5" width="3.4" height="10.2" rx="0.6" fill="#7fbcf0"/><rect x="10.3" y="16.9" width="3.4" height="2.8" rx="0.5" fill="#7fbcf0"/></svg></div>
<span id="t70" class="t " style="top:451.50px;font-size:16.50px;line-height:24px;color:#fff;left:340.18px;"><span class="k" style="transform:scaleX(0.777);margin-right:-0.668em">エラー</span></span>
<span id="t71" class="t " style="top:451.50px;font-size:16.50px;line-height:24px;color:#fff;left:580.00px;letter-spacing:-0.098px;">2025/08/02 20:23:56</span>
<span id="t72" class="t " style="top:451.50px;font-size:16.50px;line-height:24px;color:#fff;left:919.46px;letter-spacing:0.842px;">disk</span>
<span id="t73" class="t " style="top:451.50px;font-size:16.50px;line-height:24px;color:#fff;right:608.81px;">7</span>
<span id="t74" class="t " style="top:451.50px;font-size:16.50px;line-height:24px;color:#fff;left:1327.03px;"><span class="k" style="transform:scaleX(0.920);margin-right:-0.160em">なし</span></span>
<div style="position:absolute;left:313.50px;top:479.00px;width:24.00px;height:24.00px"><svg width="100%" height="100%" viewBox="0 0 24 24"><defs><linearGradient id="g26" x1="0" y1="0" x2="0" y2="1"><stop offset="0" stop-color="#fff899"/><stop offset="0.45" stop-color="#fde910"/><stop offset="1" stop-color="#e9c500"/></linearGradient></defs><path d="M12.2 2.6L23.6 22.6Q23.9 23.4 23 23.5H1.4Q0.5 23.4 0.8 22.6Z" fill="url(#g26)" stroke="#c9a200" stroke-width="0.9" stroke-linejoin="round"/><rect x="10.5" y="9.3" width="3.5" height="8.2" fill="#000"/><rect x="10.5" y="18.7" width="3.5" height="2.7" fill="#000"/></svg></div>
<span id="t75" class="t " style="top:480.00px;font-size:16.50px;line-height:24px;color:#000;left:340.35px;letter-spacing:2.060px;"><span class="k" style="transform:scaleX(1.045);margin-right:0.090em">警告</span></span>
<span id="t76" class="t " style="top:480.00px;font-size:16.50px;line-height:24px;color:#000;left:580.52px;letter-spacing:-0.140px;">2025/08/02 20:23:55</span>
<span id="t77" class="t " style="top:480.00px;font-size:16.50px;line-height:24px;color:#000;left:919.78px;letter-spacing:0.714px;">disk</span>
<span id="t78" class="t " style="top:480.00px;font-size:16.50px;line-height:24px;color:#000;right:608.83px;letter-spacing:0.100px;">153</span>
<span id="t79" class="t " style="top:480.00px;font-size:16.50px;line-height:24px;color:#000;left:1327.46px;"><span class="k" style="transform:scaleX(0.908);margin-right:-0.183em">なし</span></span>
<div style="position:absolute;left:313.50px;top:507.50px;width:24.00px;height:24.00px"><svg width="100%" height="100%" viewBox="0 0 24 24"><defs><linearGradient id="g27" x1="0" y1="0" x2="0.6" y2="1"><stop offset="0" stop-color="#858585"/><stop offset="1" stop-color="#d2d2d2"/></linearGradient><linearGradient id="g28" x1="0.2" y1="0" x2="0.7" y2="1"><stop offset="0" stop-color="#ffffff"/><stop offset="0.5" stop-color="#f4f4f4"/><stop offset="1" stop-color="#d6d6d6"/></linearGradient><linearGradient id="g29" x1="0" y1="0" x2="0" y2="1"><stop offset="0" stop-color="#17309f"/><stop offset="1" stop-color="#3d6ad6"/></linearGradient></defs><circle cx="12" cy="12.2" r="10.6" fill="url(#g28)" stroke="url(#g27)" stroke-width="2"/><rect x="10.2" y="9.4" width="3.8" height="10" rx="0.5" fill="url(#g29)"/><rect x="10.2" y="5" width="3.8" height="3" rx="0.6" fill="#17309f"/></svg></div>
<span id="t80" class="t " style="top:508.50px;font-size:16.50px;line-height:24px;color:#000;left:341.20px;letter-spacing:1.100px;"><span class="k" style="transform:scaleX(1.045);margin-right:0.090em">情報</span></span>
<span id="t81" class="t " style="top:508.50px;font-size:16.50px;line-height:24px;color:#000;left:580.52px;letter-spacing:-0.140px;">2025/08/02 20:21:38</span>
<span id="t82" class="t " style="top:508.50px;font-size:16.50px;line-height:24px;color:#000;left:920.46px;letter-spacing:0.638px;">WindowsUpdateClient</span>
<span id="t83" class="t " style="top:508.50px;font-size:16.50px;line-height:24px;color:#000;right:608.42px;letter-spacing:0.500px;">19</span>
<span id="t84" class="t " style="top:508.50px;font-size:16.50px;line-height:24px;color:#000;left:1328.23px;letter-spacing:0.269px;">Windows Update <span class="k" style="transform:scaleX(0.800);margin-right:-0.600em">エージ</span><span style="letter-spacing:-0.68px">...</span></span>
<div style="position:absolute;left:313.50px;top:536.00px;width:24.00px;height:24.00px"><svg width="100%" height="100%" viewBox="0 0 24 24"><defs><linearGradient id="g30" x1="0" y1="0" x2="0.6" y2="1"><stop offset="0" stop-color="#858585"/><stop offset="1" stop-color="#d2d2d2"/></linearGradient><linearGradient id="g31" x1="0.2" y1="0" x2="0.7" y2="1"><stop offset="0" stop-color="#ffffff"/><stop offset="0.5" stop-color="#f4f4f4"/><stop offset="1" stop-color="#d6d6d6"/></linearGradient><linearGradient id="g32" x1="0" y1="0" x2="0" y2="1"><stop offset="0" stop-color="#17309f"/><stop offset="1" stop-color="#3d6ad6"/></linearGradient></defs><circle cx="12" cy="12.2" r="10.6" fill="url(#g31)" stroke="url(#g30)" stroke-width="2"/><rect x="10.2" y="9.4" width="3.8" height="10" rx="0.5" fill="url(#g32)"/><rect x="10.2" y="5" width="3.8" height="3" rx="0.6" fill="#17309f"/></svg></div>
<span id="t85" class="t " style="top:537.00px;font-size:16.50px;line-height:24px;color:#000;left:341.20px;letter-spacing:1.100px;"><span class="k" style="transform:scaleX(1.045);margin-right:0.090em">情報</span></span>
<span id="t86" class="t " style="top:537.00px;font-size:16.50px;line-height:24px;color:#000;left:580.52px;letter-spacing:-0.140px;">2025/08/02 20:21:20</span>
<span id="t87" class="t " style="top:537.00px;font-size:16.50px;line-height:24px;color:#000;left:920.46px;letter-spacing:0.638px;">WindowsUpdateClient</span>
<span id="t88" class="t " style="top:537.00px;font-size:16.50px;line-height:24px;color:#000;right:609.23px;letter-spacing:-0.300px;">43</span>
<span id="t89" class="t " style="top:537.00px;font-size:16.50px;line-height:24px;color:#000;left:1328.23px;letter-spacing:0.269px;">Windows Update <span class="k" style="transform:scaleX(0.800);margin-right:-0.600em">エージ</span><span style="letter-spacing:-0.68px">...</span></span>
<div style="position:absolute;left:313.50px;top:564.50px;width:24.00px;height:24.00px"><svg width="100%" height="100%" viewBox="0 0 24 24"><defs><linearGradient id="g33" x1="0" y1="0" x2="0.6" y2="1"><stop offset="0" stop-color="#858585"/><stop offset="1" stop-color="#d2d2d2"/></linearGradient><linearGradient id="g34" x1="0.2" y1="0" x2="0.7" y2="1"><stop offset="0" stop-color="#ffffff"/><stop offset="0.5" stop-color="#f4f4f4"/><stop offset="1" stop-color="#d6d6d6"/></linearGradient><linearGradient id="g35" x1="0" y1="0" x2="0" y2="1"><stop offset="0" stop-color="#17309f"/><stop offset="1" stop-color="#3d6ad6"/></linearGradient></defs><circle cx="12" cy="12.2" r="10.6" fill="url(#g34)" stroke="url(#g33)" stroke-width="2"/><rect x="10.2" y="9.4" width="3.8" height="10" rx="0.5" fill="url(#g35)"/><rect x="10.2" y="5" width="3.8" height="3" rx="0.6" fill="#17309f"/></svg></div>
<span id="t90" class="t " style="top:565.50px;font-size:16.50px;line-height:24px;color:#000;left:341.20px;letter-spacing:1.100px;"><span class="k" style="transform:scaleX(1.045);margin-right:0.090em">情報</span></span>
<span id="t91" class="t " style="top:565.50px;font-size:16.50px;line-height:24px;color:#000;left:580.52px;letter-spacing:-0.140px;">2025/08/02 20:20:53</span>
<span id="t92" class="t " style="top:565.50px;font-size:16.50px;line-height:24px;color:#000;left:920.46px;letter-spacing:0.638px;">WindowsUpdateClient</span>
<span id="t93" class="t " style="top:565.50px;font-size:16.50px;line-height:24px;color:#000;right:610.19px;letter-spacing:-0.800px;">44</span>
<span id="t94" class="t " style="top:565.50px;font-size:16.50px;line-height:24px;color:#000;left:1328.23px;letter-spacing:0.269px;">Windows Update <span class="k" style="transform:scaleX(0.800);margin-right:-0.600em">エージ</span><span style="letter-spacing:-0.68px">...</span></span>
<div style="position:absolute;left:313.50px;top:593.00px;width:24.00px;height:24.00px"><svg width="100%" height="100%" viewBox="0 0 24 24"><defs><linearGradient id="g36" x1="0" y1="0" x2="0.6" y2="1"><stop offset="0" stop-color="#858585"/><stop offset="1" stop-color="#d2d2d2"/></linearGradient><linearGradient id="g37" x1="0.2" y1="0" x2="0.7" y2="1"><stop offset="0" stop-color="#ffffff"/><stop offset="0.5" stop-color="#f4f4f4"/><stop offset="1" stop-color="#d6d6d6"/></linearGradient><linearGradient id="g38" x1="0" y1="0" x2="0" y2="1"><stop offset="0" stop-color="#17309f"/><stop offset="1" stop-color="#3d6ad6"/></linearGradient></defs><circle cx="12" cy="12.2" r="10.6" fill="url(#g37)" stroke="url(#g36)" stroke-width="2"/><rect x="10.2" y="9.4" width="3.8" height="10" rx="0.5" fill="url(#g38)"/><rect x="10.2" y="5" width="3.8" height="3" rx="0.6" fill="#17309f"/></svg></div>
<span id="t95" class="t " style="top:594.00px;font-size:16.50px;line-height:24px;color:#000;left:341.20px;letter-spacing:1.100px;"><span class="k" style="transform:scaleX(1.045);margin-right:0.090em">情報</span></span>
<span id="t96" class="t " style="top:594.00px;font-size:16.50px;line-height:24px;color:#000;left:580.52px;letter-spacing:-0.140px;">2025/08/02 20:10:51</span>
<span id="t97" class="t " style="top:594.00px;font-size:16.50px;line-height:24px;color:#000;left:920.28px;letter-spacing:0.454px;">Volsnap</span>
<span id="t98" class="t " style="top:594.00px;font-size:16.50px;line-height:24px;color:#000;right:608.61px;letter-spacing:0.280px;">33</span>
<span id="t99" class="t " style="top:594.00px;font-size:16.50px;line-height:24px;color:#000;left:1327.46px;"><span class="k" style="transform:scaleX(0.908);margin-right:-0.183em">なし</span></span>
<div style="position:absolute;left:313.50px;top:621.50px;width:24.00px;height:24.00px"><svg width="100%" height="100%" viewBox="0 0 24 24"><defs><linearGradient id="g39" x1="0" y1="0" x2="0.6" y2="1"><stop offset="0" stop-color="#858585"/><stop offset="1" stop-color="#d2d2d2"/></linearGradient><linearGradient id="g40" x1="0.2" y1="0" x2="0.7" y2="1"><stop offset="0" stop-color="#ffffff"/><stop offset="0.5" stop-color="#f4f4f4"/><stop offset="1" stop-color="#d6d6d6"/></linearGradient><linearGradient id="g41" x1="0" y1="0" x2="0" y2="1"><stop offset="0" stop-color="#17309f"/><stop offset="1" stop-color="#3d6ad6"/></linearGradient></defs><circle cx="12" cy="12.2" r="10.6" fill="url(#g40)" stroke="url(#g39)" stroke-width="2"/><rect x="10.2" y="9.4" width="3.8" height="10" rx="0.5" fill="url(#g41)"/><rect x="10.2" y="5" width="3.8" height="3" rx="0.6" fill="#17309f"/></svg></div>
<span id="t100" class="t " style="top:622.50px;font-size:16.50px;line-height:24px;color:#000;left:341.20px;letter-spacing:1.100px;"><span class="k" style="transform:scaleX(1.045);margin-right:0.090em">情報</span></span>
<span id="t101" class="t " style="top:622.50px;font-size:16.50px;line-height:24px;color:#000;left:580.52px;letter-spacing:-0.140px;">2025/08/02 20:10:36</span>
<span id="t102" class="t " style="top:622.50px;font-size:16.50px;line-height:24px;color:#000;left:920.28px;letter-spacing:0.454px;">Volsnap</span>
<span id="t103" class="t " style="top:622.50px;font-size:16.50px;line-height:24px;color:#000;right:608.61px;letter-spacing:0.280px;">33</span>
<span id="t104" class="t " style="top:622.50px;font-size:16.50px;line-height:24px;color:#000;left:1327.46px;"><span class="k" style="transform:scaleX(0.908);margin-right:-0.183em">なし</span></span>
<div style="position:absolute;left:313.50px;top:650.00px;width:24.00px;height:24.00px"><svg width="100%" height="100%" viewBox="0 0 24 24"><defs><linearGradient id="g42" x1="0" y1="0" x2="0" y2="1"><stop offset="0" stop-color="#8f8f8f"/><stop offset="1" stop-color="#d9d9d9"/></linearGradient><linearGradient id="g43" x1="0" y1="0" x2="0" y2="1"><stop offset="0" stop-color="#e36a6a"/><stop offset="0.45" stop-color="#cc2a2e"/><stop offset="1" stop-color="#c42428"/></linearGradient></defs><circle cx="12" cy="12.2" r="11" fill="none" stroke="url(#g42)" stroke-width="1.7"/><circle cx="12" cy="12.2" r="9.3" fill="url(#g43)"/><rect x="10.3" y="5" width="3.4" height="10.2" rx="0.6" fill="#fff"/><rect x="10.3" y="16.9" width="3.4" height="2.8" rx="0.5" fill="#fff"/></svg></div>
<span id="t105" class="t " style="top:651.00px;font-size:16.50px;line-height:24px;color:#000;left:340.43px;"><span class="k" style="transform:scaleX(0.768);margin-right:-0.697em">エラー</span></span>
<span id="t106" class="t " style="top:651.00px;font-size:16.50px;line-height:24px;color:#000;left:580.52px;letter-spacing:-0.140px;">2025/08/02 20:09:51</span>
<span id="t107" class="t " style="top:651.00px;font-size:16.50px;line-height:24px;color:#000;left:919.28px;letter-spacing:0.745px;">Ntfs (Microsoft-Wind<span style="letter-spacing:-0.20px">...</span></span>
<span id="t108" class="t " style="top:651.00px;font-size:16.50px;line-height:24px;color:#000;right:608.61px;letter-spacing:0.280px;">98</span>
<span id="t109" class="t " style="top:651.00px;font-size:16.50px;line-height:24px;color:#000;left:1327.46px;"><span class="k" style="transform:scaleX(0.908);margin-right:-0.183em">なし</span></span>
<div style="position:absolute;left:313.50px;top:678.50px;width:24.00px;height:24.00px"><svg width="100%" height="100%" viewBox="0 0 24 24"><defs><linearGradient id="g44" x1="0" y1="0" x2="0" y2="1"><stop offset="0" stop-color="#8f8f8f"/><stop offset="1" stop-color="#d9d9d9"/></linearGradient><linearGradient id="g45" x1="0" y1="0" x2="0" y2="1"><stop offset="0" stop-color="#e36a6a"/><stop offset="0.45" stop-color="#cc2a2e"/><stop offset="1" stop-color="#c42428"/></linearGradient></defs><circle cx="12" cy="12.2" r="11" fill="none" stroke="url(#g44)" stroke-width="1.7"/><circle cx="12" cy="12.2" r="9.3" fill="url(#g45)"/><rect x="10.3" y="5" width="3.4" height="10.2" rx="0.6" fill="#fff"/><rect x="10.3" y="16.9" width="3.4" height="2.8" rx="0.5" fill="#fff"/></svg></div>
<span id="t110" class="t " style="top:679.50px;font-size:16.50px;line-height:24px;color:#000;left:340.43px;"><span class="k" style="transform:scaleX(0.768);margin-right:-0.697em">エラー</span></span>
<span id="t111" class="t " style="top:679.50px;font-size:16.50px;line-height:24px;color:#000;left:580.52px;letter-spacing:-0.140px;">2025/08/02 20:09:51</span>
<span id="t112" class="t " style="top:679.50px;font-size:16.50px;line-height:24px;color:#000;left:919.28px;letter-spacing:0.745px;">Ntfs (Microsoft-Wind<span style="letter-spacing:-0.20px">...</span></span>
<span id="t113" class="t " style="top:679.50px;font-size:16.50px;line-height:24px;color:#000;right:608.61px;letter-spacing:0.280px;">98</span>
<span id="t114" class="t " style="top:679.50px;font-size:16.50px;line-height:24px;color:#000;left:1327.46px;"><span class="k" style="transform:scaleX(0.908);margin-right:-0.183em">なし</span></span>
<span id="t115" class="t " style="top:720.30px;font-size:18.00px;line-height:24px;color:#000;left:312.01px;font-family:'Liberation Sans','IPAGothic','Noto Sans CJK JP',sans-serif;letter-spacing:0.095px;"><span class="k" style="font-size:110%;transform:scaleX(0.670);margin-right:-1.320em">イベント</span> <span style="font-size:97%">7,</span> <span style="font-size:97%">disk</span></span>
<svg style="position:absolute;left:1525.4px;top:726px" width="14" height="14" viewBox="0 0 14 14"><path d="M1.6 1.8L12.4 12.2M12.4 1.8L1.6 12.2" stroke="#000" stroke-width="2.7"/></svg>
<div style="position:absolute;left:310.50px;top:749.00px;width:1241.50px;height:3.00px;background:#a8a8a8;"></div>
<div style="position:absolute;left:318.80px;top:761.40px;width:67.60px;height:33.00px;background:#f9f9f9;"></div>
<div style="position:absolute;left:386.40px;top:764.70px;width:58.60px;height:28.60px;background:#f0f0f0;border:1px solid #f6f6f6;border-bottom:none;box-sizing:border-box"></div>
<span id="t116" class="t " style="top:765.20px;font-size:17.50px;line-height:24px;color:#000;left:330.30px;letter-spacing:-0.520px;"><span class="k" style="transform:scaleX(1.045);margin-right:0.090em">全般</span></span>
<span id="t117" class="t " style="top:767.70px;font-size:17.50px;line-height:24px;color:#000;left:393.39px;letter-spacing:-0.562px;"><span class="k" style="transform:scaleX(1.045);margin-right:0.090em">詳細</span></span>
<div style="position:absolute;left:318.80px;top:793.30px;width:1223.00px;height:159.70px;background:#f9f9f9;"></div>
<div style="position:absolute;left:324.00px;top:795.80px;width:1214.00px;height:152.50px;background:#f0f0f0;"></div>
<div style="position:absolute;left:1513.00px;top:796.50px;width:1.00px;height:152.00px;background:#f6f6f6;"></div>
<div style="position:absolute;left:1522.60px;top:820.00px;width:6.90px;height:48.00px;background:#898989;border-radius:3.4px"></div>
<div style="position:absolute;left:341.00px;top:817.00px;width:1126.00px;height:103.00px;background:#f0f0f0;border:2px solid #6e6e6e;border-right:1.5px solid #fff;border-bottom:1.5px solid #fff;box-sizing:border-box"></div>
<div style="position:absolute;left:346px;top:820px;width:1100px;height:28px">
<span id="t118" class="t " style="top:1.80px;font-size:18.00px;line-height:24px;color:#000;left:-1.00px;font-family:'Liberation Sans','IPAGothic','Noto Sans CJK JP',sans-serif;letter-spacing:1.390px;"><span class="k" style="font-size:108%;transform:scaleX(0.720);margin-right:-1.120em">デバイス</span></span>
<span id="t119" class="t " style="top:1.80px;font-size:18.00px;line-height:24px;color:#000;left:63.00px;font-family:'Liberation Sans','IPAGothic','Noto Sans CJK JP',sans-serif;letter-spacing:0.632px;"><span style="font-size:87%">¥Device¥Harddisk0¥DR0</span></span>
<span id="t120" class="t " style="top:1.80px;font-size:18.00px;line-height:24px;color:#000;left:256.76px;font-family:'Liberation Sans','IPAGothic','Noto Sans CJK JP',sans-serif;letter-spacing:-0.277px;"><span class="k" style="font-size:108%;transform:scaleX(0.720);margin-right:-0.280em">に</span>不良<span class="k" style="font-size:108%;transform:scaleX(0.720);margin-right:-2.520em">ブロックがあります</span>。</span>
</div>
<div style="position:absolute;left:327px;top:940px;width:1186px;height:8.3px;overflow:hidden">
<span id="t121" class="t " style="top:1.30px;font-size:18.00px;line-height:24px;color:#000;left:10.80px;font-family:'Liberation Sans','IPAGothic','Noto Sans CJK JP',sans-serif;letter-spacing:-0.854px;"><span class="k" style="font-size:108%;transform:scaleX(0.720);margin-right:-0.840em">ログの</span>名前<span style="font-size:87%">(M):</span></span>
<span id="t122" class="t " style="top:1.30px;font-size:18.00px;line-height:24px;color:#000;left:236.00px;font-family:'Liberation Sans','IPAGothic','Noto Sans CJK JP',sans-serif;letter-spacing:-2.998px;"><span class="k" style="font-size:108%;transform:scaleX(0.720);margin-right:-1.120em">システム</span></span>
</div>
<div style="position:absolute;left:1567.00px;top:969.50px;width:353.00px;height:1.50px;background:#e3e3e3;"></div>
<div style="position:absolute;left:1567.00px;top:113.00px;width:353.00px;height:856.50px;background:#fff;border-left:3px solid #7a7a7a;border-top:3px solid #7a7a7a;box-sizing:border-box"></div>
<div style="position:absolute;left:1570.00px;top:116.00px;width:348.00px;height:2.50px;background:#fff;"></div>
<div style="position:absolute;left:1570.00px;top:118.50px;width:348.00px;height:27.50px;background:#f0f0f0;"></div>
<div style="position:absolute;left:1570.00px;top:146.00px;width:348.00px;height:1.50px;background:#a0a0a0;"></div>
<span id="t123" class="t " style="top:121.80px;font-size:16.50px;line-height:24px;color:#000;left:1578.02px;font-weight:bold;letter-spacing:0.415px;"><span class="k" style="transform:scaleX(1.045);margin-right:0.090em">操作</span></span>
<div style="position:absolute;left:1570.00px;top:149.00px;width:348.00px;height:37.70px;background:#b4cde8;background:linear-gradient(#bdd3ec,#9bb5d6)"></div>
<span id="t124" class="t " style="top:157.50px;font-size:16.50px;line-height:24px;color:#000;left:1579.83px;"><span class="k" style="transform:scaleX(0.833);margin-right:-0.668em">システム</span></span>
<svg style="position:absolute;left:1894px;top:163.4px" width="15" height="9" viewBox="0 0 15 9"><path d="M0.5 8.5L7.5 1L14.5 8.5Z" fill="#000"/></svg>
<div style="position:absolute;left:1570.00px;top:632.50px;width:348.00px;height:37.70px;background:#b4cde8;background:linear-gradient(#bdd3ec,#9bb5d6)"></div>
<span id="t125" class="t " style="top:641.00px;font-size:16.50px;line-height:24px;color:#000;left:1579.91px;letter-spacing:0.024px;"><span class="k" style="transform:scaleX(0.800);margin-right:-0.800em">イベント</span> 7, disk</span>
<svg style="position:absolute;left:1894px;top:646.9px" width="15" height="9" viewBox="0 0 15 9"><path d="M0.5 8.5L7.5 1L14.5 8.5Z" fill="#000"/></svg>
<div style="position:absolute;left:1577.00px;top:193.50px;width:24.00px;height:24.00px"><svg width="100%" height="100%" viewBox="0 0 24 24"><rect x="15" y="-1.6" width="6.4" height="1.5" fill="#4fdc4f"/><path d="M3.4 8.4H10L11.6 6.4H19.4V17H3.4Z" fill="#e8cf86" stroke="#c7a652" stroke-width="0.8"/><rect x="13" y="7.6" width="3.6" height="1.6" fill="#4d8fe0"/><path d="M1 12.6H9.4L11 10.8H21.6L18.6 21.8H1.6Z" fill="#f3dd9c" stroke="#c7a652" stroke-width="0.8"/><path d="M1.6 21.8H18.6L19 20.2H1.4Z" fill="#d7b862"/></svg></div>
<span id="t126" class="t " style="top:194.20px;font-size:16.50px;line-height:24px;color:#000;left:1617.55px;"><span class="k" style="transform:scaleX(1.045);margin-right:0.090em">保存</span><span class="k" style="transform:scaleX(0.775);margin-right:-1.348em">されたログを</span><span class="k" style="transform:scaleX(1.045);margin-right:0.045em">開</span><span class="k" style="transform:scaleX(0.775);margin-right:-0.225em">く</span><span style="letter-spacing:-0.95px">...</span></span>
<div style="position:absolute;left:1577.00px;top:229.60px;width:24.00px;height:24.00px"><svg width="100%" height="100%" viewBox="0 0 24 24"><defs><linearGradient id="g46" x1="0" y1="0" x2="1" y2="0"><stop offset="0" stop-color="#9db8cf"/><stop offset="0.45" stop-color="#c3d6e6"/><stop offset="0.62" stop-color="#6d8ca8"/><stop offset="1" stop-color="#4a6a86"/></linearGradient><linearGradient id="g47" x1="0" y1="0" x2="0" y2="1"><stop offset="0" stop-color="#5f7f9a"/><stop offset="1" stop-color="#a9c2d6"/></linearGradient></defs><path d="M0.4 0.6H23.2L14.4 10.8V20.4L10.4 21.6V10.8Z" fill="url(#g46)"/><path d="M0.4 0.6H23.2L21.6 2.6H2.2Z" fill="url(#g47)"/><path d="M3.2 3H20.8L19.4 4.4H4.6Z" fill="#dbe7f1"/><defs><radialGradient id="g48" cx="0.45" cy="0.4" r="0.6"><stop offset="0" stop-color="#ffe14d"/><stop offset="0.6" stop-color="#ffb020"/><stop offset="1" stop-color="#ff9a10"/></radialGradient></defs><path d="M2 0.4H11.8L13.6 2.6L12.2 4.6L14 6.8L11.2 7.6L11.4 10.2L8.6 9.6L7.2 11.6L5.6 9L2.8 9.4L3.4 6.4L1.2 4.4L3.2 2.8Z" fill="url(#g48)"/></svg></div>
<span id="t127" class="t " style="top:230.30px;font-size:16.50px;line-height:24px;color:#000;left:1616.38px;"><span class="k" style="transform:scaleX(0.776);margin-right:-0.897em">カスタム</span> <span class="k" style="transform:scaleX(0.776);margin-right:-0.897em">ビューの</span><span class="k" style="transform:scaleX(1.045);margin-right:0.090em">作成</span><span style="letter-spacing:-0.95px">...</span></span>
<span id="t128" class="t " style="top:265.90px;font-size:16.50px;line-height:24px;color:#000;left:1616.63px;"><span class="k" style="transform:scaleX(0.760);margin-right:-0.960em">カスタム</span> <span class="k" style="transform:scaleX(0.760);margin-right:-2.159em">ビューのインポート</span><span style="letter-spacing:-0.95px">...</span></span>
<div style="position:absolute;left:1577.00px;top:295.50px;width:333.00px;height:1.00px;background:#e0e0e0;"></div>
<span id="t129" class="t " style="top:303.00px;font-size:16.50px;line-height:24px;color:#000;left:1615.87px;letter-spacing:0.183px;"><span class="k" style="transform:scaleX(0.800);margin-right:-0.600em">ログの</span><span class="k" style="transform:scaleX(1.045);margin-right:0.090em">消去</span><span style="letter-spacing:-0.77px">...</span></span>
<div style="position:absolute;left:1577.00px;top:338.80px;width:24.00px;height:24.00px"><svg width="100%" height="100%" viewBox="0 0 24 24"><defs><linearGradient id="g49" x1="0" y1="0" x2="1" y2="0"><stop offset="0" stop-color="#9db8cf"/><stop offset="0.45" stop-color="#c3d6e6"/><stop offset="0.62" stop-color="#6d8ca8"/><stop offset="1" stop-color="#4a6a86"/></linearGradient><linearGradient id="g50" x1="0" y1="0" x2="0" y2="1"><stop offset="0" stop-color="#5f7f9a"/><stop offset="1" stop-color="#a9c2d6"/></linearGradient></defs><path d="M0.4 0.6H23.2L14.4 10.8V20.4L10.4 21.6V10.8Z" fill="url(#g49)"/><path d="M0.4 0.6H23.2L21.6 2.6H2.2Z" fill="url(#g50)"/><path d="M3.2 3H20.8L19.4 4.4H4.6Z" fill="#dbe7f1"/></svg></div>
<span id="t130" class="t " style="top:339.50px;font-size:16.50px;line-height:24px;color:#000;left:1617.36px;"><span class="k" style="transform:scaleX(1.045);margin-right:0.090em">現在</span><span class="k" style="transform:scaleX(0.772);margin-right:-2.049em">のログをフィルター</span><span style="letter-spacing:-0.95px">...</span></span>
<div style="position:absolute;left:1577.00px;top:374.30px;width:24.00px;height:24.00px"><svg width="100%" height="100%" viewBox="0 0 24 24"><rect x="1" y="1.6" width="21.6" height="20" rx="2" fill="#f4f4f4" stroke="#8a8a8a" stroke-width="1.3"/><rect x="2.2" y="2.8" width="19.2" height="2.6" fill="#c6c6c6"/><rect x="4" y="7" width="15.6" height="12.6" fill="#fff" stroke="#a9a9a9" stroke-width="0.9"/><rect x="6" y="9.4" width="2" height="1.5" fill="#4a86d8"/><rect x="9.4" y="9.4" width="8.4" height="1.5" fill="#7e9fc8"/><rect x="6" y="12.4" width="2" height="1.5" fill="#4a86d8"/><rect x="9.4" y="12.4" width="8.4" height="1.5" fill="#7e9fc8"/><rect x="6" y="15.4" width="2" height="1.5" fill="#4a86d8"/><rect x="9.4" y="15.4" width="8.4" height="1.5" fill="#7e9fc8"/><rect x="9.6" y="21.8" width="4.8" height="1.6" fill="#33b5f0"/></svg></div>
<span id="t131" class="t " style="top:375.00px;font-size:16.50px;line-height:24px;color:#000;left:1616.43px;"><span class="k" style="transform:scaleX(0.810);margin-right:-0.952em">プロパティ</span></span>
<div style="position:absolute;left:1577.00px;top:411.00px;width:24.00px;height:24.00px"><svg width="100%" height="100%" viewBox="0 0 24 24"><defs><linearGradient id="g51" x1="0" y1="0" x2="1" y2="0"><stop offset="0" stop-color="#59626c"/><stop offset="0.3" stop-color="#c9cdd2"/><stop offset="0.6" stop-color="#9aa1a9"/><stop offset="1" stop-color="#4e5761"/></linearGradient></defs><path d="M3.2 1.2H8.6L9.4 3.4V8L10.8 16.8H0.6L2.4 8V3.4Z" fill="url(#g51)" stroke="#4a525c" stroke-width="0.6"/><path d="M15.4 1.2H20.8L21.6 3.4V8L23.4 16.8H13.2L14.6 8V3.4Z" fill="url(#g51)" stroke="#4a525c" stroke-width="0.6"/><rect x="9.6" y="4.4" width="4.8" height="9.2" fill="#a7adb4" stroke="#59626c" stroke-width="0.6"/><rect x="11" y="3.2" width="2" height="2.4" fill="#59626c"/><rect x="0.6" y="16.4" width="10.2" height="2.4" fill="#4c5560"/><rect x="13.2" y="16.4" width="10.2" height="2.4" fill="#4c5560"/><path d="M1 18.8H10.4L9.4 23.4H2Z" fill="#2f9df0"/><path d="M13.6 18.8H23L22 23.4H14.6Z" fill="#2f9df0"/><rect x="4.2" y="19.6" width="3.6" height="2.6" fill="#bfe3fc"/><rect x="16.6" y="19.6" width="3.6" height="2.6" fill="#bfe3fc"/><path d="M0.6 23.2H11M13.2 23.2H23.4" stroke="#e8eef4" stroke-width="0.9" stroke-dasharray="1.6 1.2"/></svg></div>
<span id="t132" class="t " style="top:411.70px;font-size:16.50px;line-height:24px;color:#000;left:1617.07px;letter-spacing:-0.130px;"><span class="k" style="transform:scaleX(1.045);margin-right:0.090em">検索</span><span style="letter-spacing:-1.08px">...</span></span>
<div style="position:absolute;left:1577.00px;top:446.50px;width:24.00px;height:24.00px"><svg width="100%" height="100%" viewBox="0 0 24 24"><path d="M1.6 1.6H22.4V22.4H3.4L1.6 20.6Z" fill="#4a4a4a"/><rect x="4.6" y="1.6" width="14.8" height="11" fill="#fdfdfd"/><rect x="6" y="15.6" width="12.4" height="6.8" fill="#9a9a9a"/><rect x="7.6" y="16.8" width="3.4" height="4.6" fill="#3c3c3c"/></svg></div>
<span id="t133" class="t " style="top:447.20px;font-size:16.50px;line-height:24px;color:#000;left:1616.71px;"><span class="k" style="transform:scaleX(0.845);margin-right:-1.398em">すべてのイベントを</span><span class="k" style="transform:scaleX(1.045);margin-right:0.090em">名前</span><span class="k" style="transform:scaleX(0.845);margin-right:-0.621em">をつけて</span><span class="k" style="transform:scaleX(1.045);margin-right:0.090em">保存</span><span style="letter-spacing:-0.95px">...</span></span>
<span id="t134" class="t " style="top:482.80px;font-size:16.50px;line-height:24px;color:#000;left:1615.87px;"><span class="k" style="transform:scaleX(0.814);margin-right:-1.677em">このログにタスクを</span><span class="k" style="transform:scaleX(1.045);margin-right:0.090em">設定</span><span style="letter-spacing:-0.95px">...</span></span>
<div style="position:absolute;left:1577.00px;top:513.00px;width:333.00px;height:1.00px;background:#e0e0e0;"></div>
<span id="t135" class="t " style="top:520.40px;font-size:16.50px;line-height:24px;color:#000;left:1616.67px;letter-spacing:1.380px;"><span class="k" style="transform:scaleX(1.045);margin-right:0.090em">表示</span></span>
<svg style="position:absolute;left:1898px;top:523.9px" width="9" height="15" viewBox="0 0 9 15"><path d="M0.5 0.5L8.5 7.5L0.5 14.5Z" fill="#000"/></svg>
<div style="position:absolute;left:1577.00px;top:550.50px;width:333.00px;height:1.00px;background:#e0e0e0;"></div>
<div style="position:absolute;left:1577.00px;top:557.10px;width:24.00px;height:24.00px"><svg width="100%" height="100%" viewBox="0 0 24 24"><path d="M3.4 1.6H15.6L20.8 6.8V22.6H3.4Z" fill="#fafafa" stroke="#a8a8a8" stroke-width="1"/><path d="M15.6 1.6V6.8H20.8Z" fill="#e0e0e0" stroke="#a8a8a8" stroke-width="0.8"/><path d="M17.2 13.6A5.2 5.2 0 1 0 14.4 18.2" fill="none" stroke="#3cbf2d" stroke-width="2.5"/><path d="M19.8 12.4L17.4 17.8L13.2 13.8Z" fill="#3cbf2d"/></svg></div>
<span id="t136" class="t " style="top:557.80px;font-size:16.50px;line-height:24px;color:#000;left:1616.51px;letter-spacing:0.846px;"><span class="k" style="transform:scaleX(1.045);margin-right:0.090em">最新</span><span class="k" style="transform:scaleX(0.800);margin-right:-0.200em">の</span><span class="k" style="transform:scaleX(1.045);margin-right:0.090em">情報</span><span class="k" style="transform:scaleX(0.800);margin-right:-0.200em">に</span><span class="k" style="transform:scaleX(1.045);margin-right:0.090em">更新</span></span>
<div style="position:absolute;left:1577.00px;top:588.00px;width:333.00px;height:1.00px;background:#e0e0e0;"></div>
<div style="position:absolute;left:1577.00px;top:593.70px;width:24.00px;height:24.00px"><svg width="100%" height="100%" viewBox="0 0 20 24"><defs><linearGradient id="g52" x1="0" y1="0" x2="1" y2="1"><stop offset="0" stop-color="#3a63d6"/><stop offset="0.5" stop-color="#5f86e6"/><stop offset="1" stop-color="#3350b8"/></linearGradient></defs><rect x="0.3" y="0.3" width="19.4" height="23.4" fill="url(#g52)" stroke="#2c3f94" stroke-width="0.8"/><rect x="0.3" y="0.3" width="4.2" height="23.4" fill="#26378c"/><text transform="translate(12.2 20.6) scale(0.72 1)" text-anchor="middle" font-family="Liberation Sans,sans-serif" font-size="25" fill="#fff" stroke="#fff" stroke-width="0.5">?</text></svg></div>
<span id="t137" class="t " style="top:594.40px;font-size:16.50px;line-height:24px;color:#000;left:1616.37px;"><span class="k" style="transform:scaleX(0.847);margin-right:-0.460em">ヘルプ</span></span>
<div style="position:absolute;left:1577.00px;top:675.80px;width:24.00px;height:24.00px"><svg width="100%" height="100%" viewBox="0 0 24 24"><rect x="1" y="1.6" width="21.6" height="20" rx="2" fill="#f4f4f4" stroke="#8a8a8a" stroke-width="1.3"/><rect x="2.2" y="2.8" width="19.2" height="2.6" fill="#c6c6c6"/><rect x="4" y="7" width="15.6" height="12.6" fill="#fff" stroke="#a9a9a9" stroke-width="0.9"/><rect x="6" y="9.4" width="2" height="1.5" fill="#4a86d8"/><rect x="9.4" y="9.4" width="8.4" height="1.5" fill="#7e9fc8"/><rect x="6" y="12.4" width="2" height="1.5" fill="#4a86d8"/><rect x="9.4" y="12.4" width="8.4" height="1.5" fill="#7e9fc8"/><rect x="6" y="15.4" width="2" height="1.5" fill="#4a86d8"/><rect x="9.4" y="15.4" width="8.4" height="1.5" fill="#7e9fc8"/><rect x="9.6" y="21.8" width="4.8" height="1.6" fill="#33b5f0"/></svg></div>
<span id="t138" class="t " style="top:676.50px;font-size:16.50px;line-height:24px;color:#000;left:1616.49px;"><span class="k" style="transform:scaleX(0.817);margin-right:-1.829em">イベントのプロパティ</span></span>
<div style="position:absolute;left:1577.00px;top:712.10px;width:24.00px;height:24.00px"><svg width="100%" height="100%" viewBox="0 0 24 24"><rect x="3.4" y="3.4" width="19" height="19" rx="1.2" fill="#d9d9d9" stroke="#8a8a8a" stroke-width="1"/><rect x="3.4" y="3" width="19" height="2.2" fill="#9a5a3c"/><rect x="5" y="19.6" width="15.8" height="2.2" fill="#b9b9b9"/><circle cx="13" cy="12.2" r="5.8" fill="#fff" stroke="#7c8894" stroke-width="1.3"/><path d="M13 8.4V12.4H16" fill="none" stroke="#3a6fa8" stroke-width="1.3"/><path d="M4 0L5.2 2.8L8.2 2.4L6.2 4.6L7.6 7.4L4.6 6.2L2 8L2.6 5L0.2 3.2L3.2 2.9Z" fill="#ffb01f"/></svg></div>
<span id="t139" class="t " style="top:712.80px;font-size:16.50px;line-height:24px;color:#000;left:1615.87px;"><span class="k" style="transform:scaleX(0.811);margin-right:-2.081em">このイベントにタスクを</span><span class="k" style="transform:scaleX(1.045);margin-right:0.090em">設定</span><span style="letter-spacing:-0.95px">...</span></span>
<div style="position:absolute;left:1577.00px;top:747.60px;width:24.00px;height:24.00px"><svg width="100%" height="100%" viewBox="0 0 24 24"><path d="M1.6 1.4H9.6L12.8 4.6V15H1.6Z" fill="#fdfdfd" stroke="#9a9a9a" stroke-width="1"/><rect x="3.6" y="6" width="6.6" height="1.2" fill="#5b8fd6"/><rect x="3.6" y="8.8" width="6.6" height="1.2" fill="#5b8fd6"/><rect x="3.6" y="11.6" width="4" height="1.2" fill="#5b8fd6"/><path d="M10.6 8.8H18.8L22.2 12.2V23H10.6Z" fill="#fdfdfd" stroke="#9a9a9a" stroke-width="1"/><rect x="12.8" y="14" width="7" height="1.2" fill="#5b8fd6"/><rect x="12.8" y="16.8" width="7" height="1.2" fill="#5b8fd6"/><rect x="12.8" y="19.6" width="7" height="1.2" fill="#5b8fd6"/></svg></div>
<span id="t140" class="t " style="top:748.30px;font-size:16.50px;line-height:24px;color:#000;left:1615.87px;"><span class="k" style="transform:scaleX(0.741);margin-right:-0.778em">コピー</span></span>
<svg style="position:absolute;left:1898px;top:751.8px" width="9" height="15" viewBox="0 0 9 15"><path d="M0.5 0.5L8.5 7.5L0.5 14.5Z" fill="#000"/></svg>
<div style="position:absolute;left:1577.00px;top:784.30px;width:24.00px;height:24.00px"><svg width="100%" height="100%" viewBox="0 0 24 24"><path d="M1.6 1.6H22.4V22.4H3.4L1.6 20.6Z" fill="#4a4a4a"/><rect x="4.6" y="1.6" width="14.8" height="11" fill="#fdfdfd"/><rect x="6" y="15.6" width="12.4" height="6.8" fill="#9a9a9a"/><rect x="7.6" y="16.8" width="3.4" height="4.6" fill="#3c3c3c"/></svg></div>
<span id="t141" class="t " style="top:785.00px;font-size:16.50px;line-height:24px;color:#000;left:1616.85px;"><span class="k" style="transform:scaleX(1.045);margin-right:0.090em">選択</span><span class="k" style="transform:scaleX(0.815);margin-right:-1.295em">したイベントの</span><span class="k" style="transform:scaleX(1.045);margin-right:0.090em">保存</span><span style="letter-spacing:-0.95px">...</span></span>
<div style="position:absolute;left:1577.00px;top:815.00px;width:333.00px;height:1.00px;background:#e0e0e0;"></div>
<div style="position:absolute;left:1577.00px;top:821.10px;width:24.00px;height:24.00px"><svg width="100%" height="100%" viewBox="0 0 24 24"><path d="M3.4 1.6H15.6L20.8 6.8V22.6H3.4Z" fill="#fafafa" stroke="#a8a8a8" stroke-width="1"/><path d="M15.6 1.6V6.8H20.8Z" fill="#e0e0e0" stroke="#a8a8a8" stroke-width="0.8"/><path d="M17.2 13.6A5.2 5.2 0 1 0 14.4 18.2" fill="none" stroke="#3cbf2d" stroke-width="2.5"/><path d="M19.8 12.4L17.4 17.8L13.2 13.8Z" fill="#3cbf2d"/></svg></div>
<span id="t142" class="t " style="top:821.80px;font-size:16.50px;line-height:24px;color:#000;left:1616.51px;letter-spacing:0.846px;"><span class="k" style="transform:scaleX(1.045);margin-right:0.090em">最新</span><span class="k" style="transform:scaleX(0.800);margin-right:-0.200em">の</span><span class="k" style="transform:scaleX(1.045);margin-right:0.090em">情報</span><span class="k" style="transform:scaleX(0.800);margin-right:-0.200em">に</span><span class="k" style="transform:scaleX(1.045);margin-right:0.090em">更新</span></span>
<div style="position:absolute;left:1577.00px;top:852.00px;width:333.00px;height:1.00px;background:#e0e0e0;"></div>
<div style="position:absolute;left:1577.00px;top:857.90px;width:24.00px;height:24.00px"><svg width="100%" height="100%" viewBox="0 0 20 24"><defs><linearGradient id="g53" x1="0" y1="0" x2="1" y2="1"><stop offset="0" stop-color="#3a63d6"/><stop offset="0.5" stop-color="#5f86e6"/><stop offset="1" stop-color="#3350b8"/></linearGradient></defs><rect x="0.3" y="0.3" width="19.4" height="23.4" fill="url(#g53)" stroke="#2c3f94" stroke-width="0.8"/><rect x="0.3" y="0.3" width="4.2" height="23.4" fill="#26378c"/><text transform="translate(12.2 20.6) scale(0.72 1)" text-anchor="middle" font-family="Liberation Sans,sans-serif" font-size="25" fill="#fff" stroke="#fff" stroke-width="0.5">?</text></svg></div>
<span id="t143" class="t " style="top:858.60px;font-size:16.50px;line-height:24px;color:#000;left:1616.37px;"><span class="k" style="transform:scaleX(0.847);margin-right:-0.460em">ヘルプ</span></span>
<div style="position:absolute;left:0.00px;top:972.50px;width:1920.00px;height:36.00px;background:#f0f0f0;"></div>
<div style="position:absolute;left:0.00px;top:972.50px;width:1920.00px;height:1.00px;background:#f8f8f8;"></div>
<div style="position:absolute;left:1434.00px;top:975.70px;width:1.00px;height:33.00px;background:#dcdcdc;"></div>
<div style="position:absolute;left:1730.00px;top:975.70px;width:1.00px;height:33.00px;background:#dcdcdc;"></div>
<div style="position:absolute;left:1917.50px;top:975.70px;width:1.00px;height:33.00px;background:#dcdcdc;"></div>
</body></html>
